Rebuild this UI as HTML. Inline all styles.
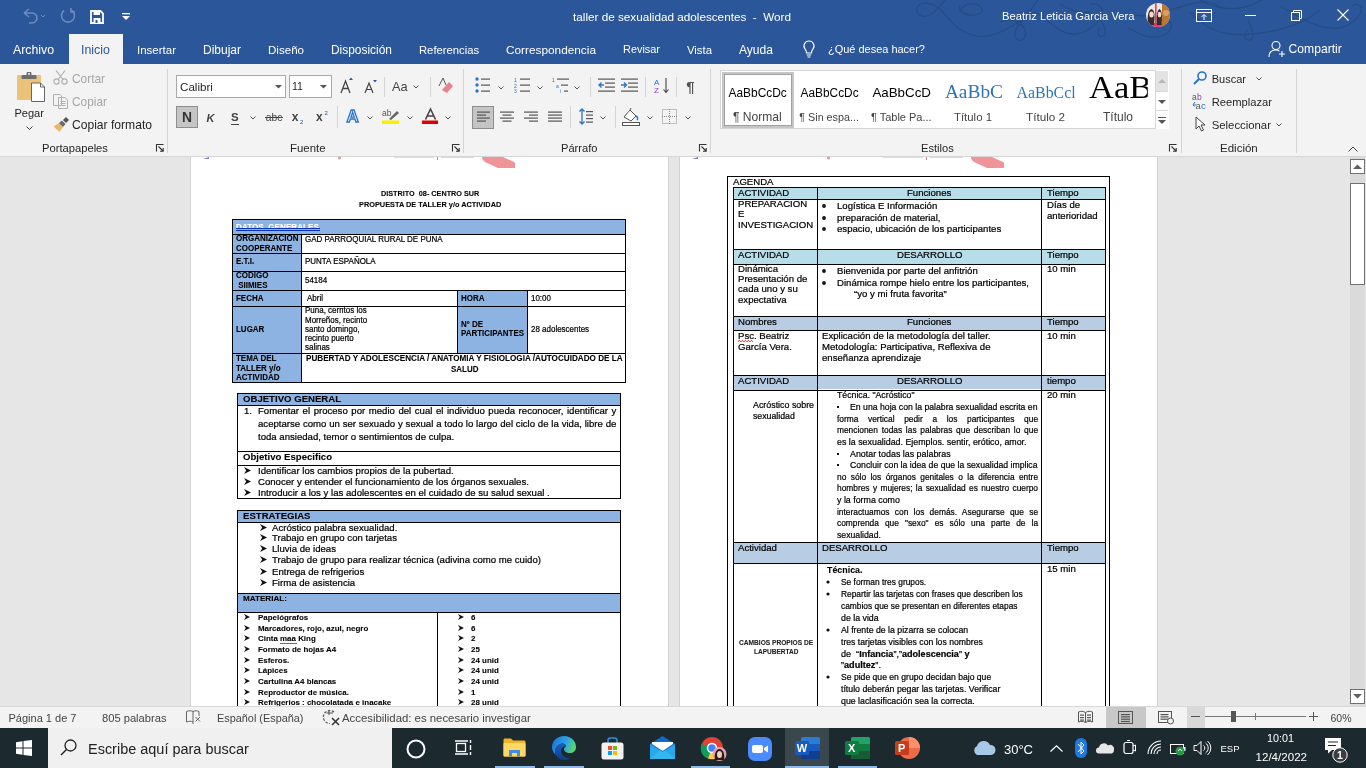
<!DOCTYPE html>
<html><head><meta charset="utf-8">
<style>
*{margin:0;padding:0;box-sizing:border-box}
html,body{width:1366px;height:768px;overflow:hidden;background:#e6e6e6;font-family:"Liberation Sans",sans-serif}
.a{position:absolute;white-space:pre}
svg.a{overflow:visible}
</style></head><body>
<div id="root" style="position:absolute;left:0;top:0;width:1366px;height:768px;overflow:hidden;will-change:transform">
<div class="a" style="left:0px;top:0px;width:1366px;height:64px;background:#2b579a"></div>
<svg class="a" style="left:20px;top:7px;" width="24" height="18" viewBox="0 0 24 18"><path d="M4 6 L9 2 M4 6 L9 10 M4 6 H12 a5 5 0 0 1 0 10 H9" fill="none" stroke="#6d8bbd" stroke-width="1.6"/><path d="M21 8 l2 2 l2 -2" fill="none" stroke="#6d8bbd" stroke-width="1"/></svg>
<svg class="a" style="left:59px;top:7px;" width="18" height="18" viewBox="0 0 18 18"><path d="M5 3.5 A6.5 6.5 0 1 0 13 3.5" fill="none" stroke="#6d8bbd" stroke-width="1.6"/><path d="M12 1 V5 H16" fill="none" stroke="#6d8bbd" stroke-width="1.6"/></svg>
<svg class="a" style="left:90px;top:10px;" width="14" height="14" viewBox="0 0 14 14"><path d="M1 1 H10.5 L13 3.5 V13 H1 Z" fill="none" stroke="#fff" stroke-width="1.8"/><rect x="3.5" y="1.5" width="6.5" height="3.5" fill="#fff"/><rect x="3.5" y="8" width="7" height="5" fill="#fff"/><rect x="5.5" y="10" width="2" height="3" fill="#2b579a"/></svg>
<svg class="a" style="left:122px;top:13px;" width="8" height="8" viewBox="0 0 8 8"><rect x="0" y="0" width="8" height="1.3" fill="#fff"/><path d="M0 3 H8 L4 7 Z" fill="#fff"/></svg>
<svg class="a" style="left:900px;top:0px;" width="466" height="64" viewBox="0 0 466 64"><g fill="none" stroke="#24497f" stroke-width="1.3" opacity="0.75"><path d="M41 10 C30 0 18 2 17 9 C16 16 26 19 33 13 C40 7 44 0 48 -2"/><path d="M41 10 C50 20 56 30 72 35 C88 40 104 32 118 22 C128 15 133 6 138 0"/><path d="M60 12 C62 3 74 2 80 6 C86 10 80 16 70 15 C62 14 58 10 60 5"/><path d="M135 12 C122 18 112 30 116 38 C120 44 128 38 125 30 C122 22 110 18 100 22"/><path d="M135 12 C150 22 160 33 172 34 C184 35 196 26 201 16 C205 8 198 2 190 4"/><path d="M160 4 C170 10 180 14 190 12"/><path d="M200 18 C204 26 208 33 203 36 C198 38 196 32 200 28"/><path d="M228 28 C240 34 250 40 262 36 C272 32 274 24 268 20 C262 18 258 26 266 30"/><path d="M232 14 C248 20 268 10 290 4 C305 0 315 2 320 8"/><path d="M290 12 C300 22 312 32 330 34 C350 36 370 32 385 28 C400 24 410 18 420 10"/><path d="M348 20 C352 30 356 38 350 40 C344 41 343 34 348 30"/><path d="M380 6 C395 14 410 26 430 28 C445 30 455 22 460 14 C464 6 458 2 452 6"/><path d="M300 0 C310 6 325 10 340 8 C355 6 360 0 366 -2"/></g></svg>
<div class="a" style="left:573.00px;top:10px;font-size:11.72px;line-height:13px;color:#ffffff;">taller de sexualidad adolescentes  -  Word</div>
<div class="a" style="left:1002.00px;top:10px;font-size:11.19px;line-height:12px;color:#ffffff;">Beatriz Leticia Garcia Vera</div>
<svg class="a" style="left:1146px;top:3px;" width="24" height="24" viewBox="0 0 24 24"><defs><clipPath id="av"><circle cx="12" cy="12" r="12"/></clipPath></defs><g clip-path="url(#av)"><rect width="24" height="24" fill="#ece6e4"/><rect x="16" y="0" width="8" height="24" fill="#b9772f"/><rect x="9" y="0" width="1.6" height="24" fill="#e8357a"/><rect x="0" y="20" width="16" height="4" fill="#e8357a"/><path d="M2 22 C1 14 2 7 5.5 6 C9 7 9 14 8 22 Z" fill="#3a2a28"/><ellipse cx="5.5" cy="11.5" rx="2.2" ry="3" fill="#f0dcd0"/><path d="M11 22 C10 14 11 7 13.5 6 C16 7 16.5 14 15.5 22 Z" fill="#3a2a28"/><ellipse cx="13.5" cy="11.5" rx="1.8" ry="2.8" fill="#f0dcd0"/><circle cx="20" cy="10" r="3" fill="#d8a060"/></g></svg>
<svg class="a" style="left:1196px;top:9px;" width="16" height="13" viewBox="0 0 16 13"><rect x="0.5" y="0.5" width="15" height="12" fill="none" stroke="#fff"/><line x1="0.5" y1="3.5" x2="15.5" y2="3.5" stroke="#fff"/><path d="M8 11 V6 M5.5 8 L8 5.5 L10.5 8" fill="none" stroke="#fff"/></svg>
<svg class="a" style="left:1245px;top:15px;" width="12" height="2" viewBox="0 0 12 2"><rect width="11" height="1" fill="#fff"/></svg>
<svg class="a" style="left:1291px;top:10px;" width="12" height="12" viewBox="0 0 12 12"><rect x="0.5" y="2.5" width="8" height="8" fill="none" stroke="#fff"/><path d="M2.5 2.5 V0.5 H10.5 V8.5 H8.5" fill="none" stroke="#fff"/></svg>
<svg class="a" style="left:1337px;top:9px;" width="12" height="12" viewBox="0 0 12 12"><path d="M0.5 0.5 L11.5 11.5 M11.5 0.5 L0.5 11.5" stroke="#fff" stroke-width="1.1"/></svg>
<div class="a" style="left:69px;top:34px;width:54px;height:30px;background:#f3f3f3"></div>
<div class="a" style="left:13.00px;top:43px;font-size:12.30px;line-height:14px;color:#ffffff;">Archivo</div>
<div class="a" style="left:81.00px;top:43px;font-size:12.42px;line-height:14px;color:#2b579a;">Inicio</div>
<div class="a" style="left:137.00px;top:44px;font-size:11.50px;line-height:12px;color:#ffffff;">Insertar</div>
<div class="a" style="left:203.00px;top:43px;font-size:12.00px;line-height:14px;color:#ffffff;">Dibujar</div>
<div class="a" style="left:268.00px;top:44px;font-size:11.57px;line-height:12px;color:#ffffff;">Diseño</div>
<div class="a" style="left:331.00px;top:43px;font-size:11.93px;line-height:14px;color:#ffffff;">Disposición</div>
<div class="a" style="left:419.00px;top:44px;font-size:11.25px;line-height:12px;color:#ffffff;">Referencias</div>
<div class="a" style="left:506.00px;top:43px;font-size:11.82px;line-height:14px;color:#ffffff;">Correspondencia</div>
<div class="a" style="left:623.00px;top:43px;font-size:10.92px;line-height:12px;color:#ffffff;">Revisar</div>
<div class="a" style="left:687.00px;top:44px;font-size:11.34px;line-height:12px;color:#ffffff;">Vista</div>
<div class="a" style="left:739.00px;top:43px;font-size:12.07px;line-height:14px;color:#ffffff;">Ayuda</div>
<div class="a" style="left:828.00px;top:43px;font-size:10.98px;line-height:12px;color:#ffffff;">¿Qué desea hacer?</div>
<svg class="a" style="left:803px;top:40px;" width="12" height="18" viewBox="0 0 12 18"><path d="M6 1 A5 5 0 0 1 10 9 C8.5 10.5 8.5 12 8.5 13 H3.5 C3.5 12 3.5 10.5 2 9 A5 5 0 0 1 6 1 Z" fill="none" stroke="#fff" stroke-width="1.1"/><path d="M3.8 15 H8.2 M4.5 17 H7.5" stroke="#fff" stroke-width="1.1"/></svg>
<svg class="a" style="left:1268px;top:40px;" width="18" height="18" viewBox="0 0 18 18"><circle cx="8" cy="5.5" r="4" fill="none" stroke="#fff" stroke-width="1.1"/><path d="M1 17 C1 12 4 10 8 10 C9.5 10 10.5 10.3 11.5 11" fill="none" stroke="#fff" stroke-width="1.1"/><path d="M14 11 V17 M11 14 H17" stroke="#fff" stroke-width="1.1"/></svg>
<div class="a" style="left:1288.60px;top:42px;font-size:12.12px;line-height:14px;color:#ffffff;">Compartir</div>
<div class="a" style="left:0px;top:64px;width:1366px;height:92px;background:#f3f3f3"></div>
<div class="a" style="left:0px;top:156px;width:1366px;height:1px;background:#d6d6d6"></div>
<div class="a" style="left:167px;top:69px;width:1px;height:84px;background:#d4d4d4"></div>
<div class="a" style="left:463px;top:69px;width:1px;height:84px;background:#d4d4d4"></div>
<div class="a" style="left:710px;top:69px;width:1px;height:84px;background:#d4d4d4"></div>
<div class="a" style="left:1181px;top:69px;width:1px;height:84px;background:#d4d4d4"></div>
<div class="a" style="left:1296px;top:69px;width:1px;height:84px;background:#d4d4d4"></div>
<div class="a" style="left:42.00px;top:142px;font-size:11.20px;line-height:12px;color:#262626;">Portapapeles</div>
<div class="a" style="left:290.00px;top:142px;font-size:11.40px;line-height:12px;color:#262626;">Fuente</div>
<div class="a" style="left:561.00px;top:142px;font-size:11.13px;line-height:12px;color:#262626;">Párrafo</div>
<div class="a" style="left:921.00px;top:142px;font-size:11.10px;line-height:12px;color:#262626;">Estilos</div>
<div class="a" style="left:1220.00px;top:142px;font-size:11.53px;line-height:12px;color:#262626;">Edición</div>
<svg class="a" style="left:156px;top:144px;" width="8" height="8" viewBox="0 0 8 8"><path d="M0.5 7.5 V0.5 H7.5" fill="none" stroke="#333" stroke-width="1.1"/><path d="M2.5 2.5 L7 7 M4 7.2 H7.2 V4" fill="none" stroke="#333" stroke-width="1.1"/></svg>
<svg class="a" style="left:452px;top:144px;" width="8" height="8" viewBox="0 0 8 8"><path d="M0.5 7.5 V0.5 H7.5" fill="none" stroke="#333" stroke-width="1.1"/><path d="M2.5 2.5 L7 7 M4 7.2 H7.2 V4" fill="none" stroke="#333" stroke-width="1.1"/></svg>
<svg class="a" style="left:699px;top:144px;" width="8" height="8" viewBox="0 0 8 8"><path d="M0.5 7.5 V0.5 H7.5" fill="none" stroke="#333" stroke-width="1.1"/><path d="M2.5 2.5 L7 7 M4 7.2 H7.2 V4" fill="none" stroke="#333" stroke-width="1.1"/></svg>
<svg class="a" style="left:1169px;top:144px;" width="8" height="8" viewBox="0 0 8 8"><path d="M0.5 7.5 V0.5 H7.5" fill="none" stroke="#333" stroke-width="1.1"/><path d="M2.5 2.5 L7 7 M4 7.2 H7.2 V4" fill="none" stroke="#333" stroke-width="1.1"/></svg>
<svg class="a" style="left:1348px;top:146px;" width="10" height="6" viewBox="0 0 10 6"><path d="M0.5 5.5 L5 1 L9.5 5.5" fill="none" stroke="#444"/></svg>
<svg class="a" style="left:16px;top:71px;" width="30" height="32" viewBox="0 0 30 32"><rect x="1" y="4" width="24" height="25" rx="1" fill="#eac27a"/><path d="M5.5 8 V5.5 C5.5 4.5 6 4 7 4 H10.5 V2.5 C10.5 1.5 11 1 12 1 H14 C15 1 15.5 1.5 15.5 2.5 V4 H19 C20 4 20.5 4.5 20.5 5.5 V8 Z" fill="#6e6e6e"/><circle cx="13" cy="3" r="0.9" fill="#fff"/><path d="M15.5 12 H24.5 L28.5 16 V30.5 H15.5 Z" fill="#fff" stroke="#666" stroke-width="1"/><path d="M24.5 12 V16 H28.5" fill="none" stroke="#666" stroke-width="1"/></svg>
<div class="a" style="left:14.40px;top:107px;font-size:11.09px;line-height:12px;color:#262626;">Pegar</div>
<svg class="a" style="left:26px;top:126px;" width="7" height="4" viewBox="0 0 7 4"><path d="M0.5 0.5 L3.5 3.5 L6.5 0.5" fill="none" stroke="#444"/></svg>
<svg class="a" style="left:53px;top:70px;" width="15" height="15" viewBox="0 0 15 15"><circle cx="3.5" cy="11.5" r="2.6" fill="none" stroke="#b0b0b0" stroke-width="1.2"/><circle cx="11.5" cy="11.5" r="2.6" fill="none" stroke="#b0b0b0" stroke-width="1.2"/><path d="M5 9.5 L12 0.5 M10 9.5 L3 0.5" stroke="#b0b0b0" stroke-width="1.2"/></svg>
<div class="a" style="left:72.00px;top:72px;font-size:11.88px;line-height:14px;color:#a6a6a6;">Cortar</div>
<svg class="a" style="left:53px;top:94px;" width="15" height="15" viewBox="0 0 15 15"><path d="M0.5 0.5 H7 L8.5 2 V11.5 H0.5 Z M5.5 3.5 H12 L14.5 6 V14.5 H5.5 Z" fill="#f3f3f3" stroke="#b0b0b0"/><path d="M7.5 7.5 H12.5 M7.5 9.5 H12.5 M7.5 11.5 H12.5" stroke="#b0b0b0"/></svg>
<div class="a" style="left:72.00px;top:95px;font-size:11.88px;line-height:14px;color:#a6a6a6;">Copiar</div>
<svg class="a" style="left:53px;top:116px;" width="17" height="16" viewBox="0 0 17 16"><path d="M0.5 10.5 L6 7 L10 11 L6.5 16 Z" fill="#e8b868"/><path d="M6 7 L9 4.5 L12.5 8 L10 11 Z" fill="#6a6a6a"/><path d="M10 4 L13 1 L16 4 L13 7 Z" fill="#555"/></svg>
<div class="a" style="left:72.00px;top:118px;font-size:12.10px;line-height:14px;color:#262626;">Copiar formato</div>
<div class="a" style="left:176px;top:75px;width:110px;height:23px;background:#fff;border:1px solid #a8a8a8"></div>
<div class="a" style="left:180.00px;top:80px;font-size:11.64px;line-height:13px;color:#262626;">Calibri</div>
<svg class="a" style="left:275px;top:85px;" width="7" height="4" viewBox="0 0 7 4"><path d="M0 0 H7 L3.5 3.5 Z" fill="#555"/></svg>
<div class="a" style="left:289px;top:75px;width:43px;height:23px;background:#fff;border:1px solid #a8a8a8"></div>
<div class="a" style="left:292.00px;top:80px;font-size:10.60px;line-height:12px;color:#262626;">11</div>
<svg class="a" style="left:320px;top:85px;" width="7" height="4" viewBox="0 0 7 4"><path d="M0 0 H7 L3.5 3.5 Z" fill="#555"/></svg>
<svg class="a" style="left:340px;top:77px;" width="14" height="17" viewBox="0 0 14 17"><path d="M1 16 L5.5 4 L10 16 M2.7 11.5 H8.3" fill="none" stroke="#444" stroke-width="1.3"/><path d="M9 3 L11 0.5 L13 3 Z" fill="#2b579a"/></svg>
<svg class="a" style="left:364px;top:79px;" width="14" height="15" viewBox="0 0 14 15"><path d="M1 14 L5 4 L9 14 M2.5 10.5 H7.5" fill="none" stroke="#444" stroke-width="1.2"/><path d="M9 1 H13 L11 3.5 Z" fill="#2b579a"/></svg>
<div class="a" style="left:384px;top:77px;width:1px;height:20px;background:#d4d4d4"></div>
<div class="a" style="left:392.00px;top:79px;font-size:12.75px;line-height:15px;color:#444;">Aa</div>
<svg class="a" style="left:413px;top:85px;" width="6" height="4" viewBox="0 0 6 4"><path d="M0.5 0.5 L3 3 L5.5 0.5" fill="none" stroke="#555"/></svg>
<div class="a" style="left:430px;top:77px;width:1px;height:20px;background:#d4d4d4"></div>
<svg class="a" style="left:438px;top:77px;" width="15" height="17" viewBox="0 0 15 17"><path d="M1 9 L5 1 L8 8" fill="none" stroke="#555" stroke-width="1"/><path d="M4 13 L11 5 L15 9 L9 16 Z" fill="#e8828c"/></svg>
<div class="a" style="left:176px;top:106px;width:22px;height:22px;background:#c5c5c5;border:1px solid #8d8d8d"></div>
<div class="a" style="left:182.00px;top:109px;font-size:13.85px;line-height:16px;font-weight:bold;color:#333;">N</div>
<div class="a" style="left:206.50px;top:112px;font-size:11.00px;line-height:12px;font-weight:bold;color:#444;font-style:italic;">K</div>
<div class="a" style="left:231.00px;top:111px;font-size:11.50px;line-height:12px;font-weight:bold;color:#444;">S</div>
<div class="a" style="left:231px;top:124px;width:8px;height:1px;background:#444"></div>
<svg class="a" style="left:250px;top:116px;" width="6" height="4" viewBox="0 0 6 4"><path d="M0.5 0.5 L3 3 L5.5 0.5" fill="none" stroke="#555"/></svg>
<div class="a" style="left:265.80px;top:112px;font-size:10.30px;line-height:11px;color:#444;">abc</div>
<div class="a" style="left:265px;top:117px;width:18px;height:1px;background:#444"></div>
<div class="a" style="left:291.70px;top:110px;font-size:12.00px;line-height:14px;font-weight:bold;color:#444;">x</div>
<div class="a" style="left:300.00px;top:119px;font-size:6.00px;line-height:6px;color:#2b579a;">2</div>
<div class="a" style="left:316.00px;top:110px;font-size:12.00px;line-height:14px;font-weight:bold;color:#444;">x</div>
<div class="a" style="left:324.50px;top:110px;font-size:6.00px;line-height:6px;color:#2b579a;">2</div>
<div class="a" style="left:337px;top:106px;width:1px;height:22px;background:#d4d4d4"></div>
<svg class="a" style="left:346px;top:107px;" width="15" height="17" viewBox="0 0 15 17"><text x="0.5" y="15" font-size="17" font-weight="bold" fill="#eef4fb" stroke="#2b74c7" stroke-width="1.3" font-family="Liberation Sans">A</text></svg>
<svg class="a" style="left:367px;top:116px;" width="6" height="4" viewBox="0 0 6 4"><path d="M0.5 0.5 L3 3 L5.5 0.5" fill="none" stroke="#555"/></svg>
<svg class="a" style="left:382px;top:108px;" width="18" height="17" viewBox="0 0 18 17"><text x="0" y="8" font-size="8.5" fill="#555" font-family="Liberation Sans">ab</text><path d="M7 11 L15 3 L17 5 L9 12 Z" fill="#666"/><rect x="0" y="12.5" width="17" height="3.5" fill="#f8f000"/></svg>
<svg class="a" style="left:407px;top:116px;" width="6" height="4" viewBox="0 0 6 4"><path d="M0.5 0.5 L3 3 L5.5 0.5" fill="none" stroke="#555"/></svg>
<svg class="a" style="left:422px;top:108px;" width="17" height="17" viewBox="0 0 17 17"><path d="M3.5 11.5 L8.5 1 L13.5 11.5 M5.3 8 H11.7" fill="none" stroke="#444" stroke-width="1.6"/><rect x="0" y="12.5" width="16" height="3.5" fill="#e00000"/></svg>
<svg class="a" style="left:445px;top:116px;" width="6" height="4" viewBox="0 0 6 4"><path d="M0.5 0.5 L3 3 L5.5 0.5" fill="none" stroke="#555"/></svg>
<svg class="a" style="left:475px;top:77px;" width="15" height="16" viewBox="0 0 15 16"><circle cx="2" cy="2" r="1.7" fill="#2b74c7"/><circle cx="2" cy="8" r="1.7" fill="#2b74c7"/><circle cx="2" cy="14" r="1.7" fill="#2b74c7"/><rect x="6" y="1.5" width="9" height="1.2" fill="#555"/><rect x="6" y="7.5" width="9" height="1.2" fill="#555"/><rect x="6" y="13.5" width="9" height="1.2" fill="#555"/></svg>
<svg class="a" style="left:498px;top:86px;" width="6" height="4" viewBox="0 0 6 4"><path d="M0.5 0.5 L3 3 L5.5 0.5" fill="none" stroke="#555"/></svg>
<svg class="a" style="left:514px;top:77px;" width="16" height="16" viewBox="0 0 16 16"><text x="0" y="5" font-size="5" fill="#2b74c7" font-family="Liberation Sans">1</text><text x="0" y="11" font-size="5" fill="#2b74c7" font-family="Liberation Sans">2</text><text x="0" y="16" font-size="5" fill="#2b74c7" font-family="Liberation Sans">3</text><rect x="6" y="1.5" width="10" height="1.2" fill="#555"/><rect x="6" y="7.5" width="10" height="1.2" fill="#555"/><rect x="6" y="13.5" width="10" height="1.2" fill="#555"/></svg>
<svg class="a" style="left:537px;top:86px;" width="6" height="4" viewBox="0 0 6 4"><path d="M0.5 0.5 L3 3 L5.5 0.5" fill="none" stroke="#555"/></svg>
<svg class="a" style="left:552px;top:77px;" width="17" height="16" viewBox="0 0 17 16"><text x="0" y="5" font-size="5" fill="#2b74c7" font-family="Liberation Sans">1</text><text x="4" y="11" font-size="5" fill="#2b74c7" font-family="Liberation Sans">a</text><text x="8" y="16" font-size="5" fill="#2b74c7" font-family="Liberation Sans">i</text><rect x="5" y="1.5" width="12" height="1.2" fill="#555"/><rect x="9" y="7.5" width="7" height="1.2" fill="#555"/><rect x="12" y="13.5" width="4" height="1.2" fill="#555"/></svg>
<svg class="a" style="left:574px;top:86px;" width="6" height="4" viewBox="0 0 6 4"><path d="M0.5 0.5 L3 3 L5.5 0.5" fill="none" stroke="#555"/></svg>
<div class="a" style="left:590px;top:77px;width:1px;height:20px;background:#d4d4d4"></div>
<svg class="a" style="left:598px;top:78px;" width="17" height="14" viewBox="0 0 17 14"><rect x="0" y="0.5" width="17" height="1.2" fill="#555"/><rect x="7" y="4.5" width="10" height="1.2" fill="#555"/><rect x="7" y="8.5" width="10" height="1.2" fill="#555"/><rect x="0" y="12.5" width="17" height="1.2" fill="#555"/><path d="M6 7 H1 M3.5 4.5 L1 7 L3.5 9.5" fill="none" stroke="#2b74c7" stroke-width="1.4"/></svg>
<svg class="a" style="left:621px;top:78px;" width="17" height="14" viewBox="0 0 17 14"><rect x="0" y="0.5" width="17" height="1.2" fill="#555"/><rect x="7" y="4.5" width="10" height="1.2" fill="#555"/><rect x="7" y="8.5" width="10" height="1.2" fill="#555"/><rect x="0" y="12.5" width="17" height="1.2" fill="#555"/><path d="M0 7 H5.5 M3 4.5 L5.5 7 L3 9.5" fill="none" stroke="#2b74c7" stroke-width="1.4"/></svg>
<div class="a" style="left:645px;top:77px;width:1px;height:20px;background:#d4d4d4"></div>
<svg class="a" style="left:654px;top:77px;" width="16" height="17" viewBox="0 0 16 17"><text x="0" y="7.5" font-size="8" fill="#2b74c7" font-family="Liberation Sans">A</text><text x="0" y="16" font-size="8" fill="#8e44ad" font-family="Liberation Sans">Z</text><path d="M12 1 V15 M9.5 12.5 L12 15.5 L14.5 12.5" fill="none" stroke="#444" stroke-width="1.1"/></svg>
<div class="a" style="left:676px;top:77px;width:1px;height:20px;background:#d4d4d4"></div>
<div class="a" style="left:686.30px;top:78px;font-size:15.00px;line-height:17px;font-weight:bold;color:#555;">¶</div>
<div class="a" style="left:472px;top:106px;width:22px;height:23px;background:#c5c5c5;border:1px solid #8d8d8d"></div>
<svg class="a" style="left:477px;top:111px;" width="13" height="12" viewBox="0 0 13 12"><rect x="0" y="0.5" width="13" height="1.2" fill="#555"/><rect x="0" y="3.5" width="9" height="1.2" fill="#555"/><rect x="0" y="6.5" width="13" height="1.2" fill="#555"/><rect x="0" y="9.5" width="9" height="1.2" fill="#555"/></svg>
<svg class="a" style="left:500px;top:111px;" width="14" height="12" viewBox="0 0 14 12"><rect x="0" y="0.5" width="14" height="1.2" fill="#555"/><rect x="2.5" y="3.5" width="9" height="1.2" fill="#555"/><rect x="0" y="6.5" width="14" height="1.2" fill="#555"/><rect x="2.5" y="9.5" width="9" height="1.2" fill="#555"/></svg>
<svg class="a" style="left:524px;top:111px;" width="14" height="12" viewBox="0 0 14 12"><rect x="0" y="0.5" width="14" height="1.2" fill="#555"/><rect x="5" y="3.5" width="9" height="1.2" fill="#555"/><rect x="0" y="6.5" width="14" height="1.2" fill="#555"/><rect x="5" y="9.5" width="9" height="1.2" fill="#555"/></svg>
<svg class="a" style="left:548px;top:111px;" width="14" height="12" viewBox="0 0 14 12"><rect x="0" y="0.5" width="14" height="1.2" fill="#555"/><rect x="0" y="3.5" width="14" height="1.2" fill="#555"/><rect x="0" y="6.5" width="14" height="1.2" fill="#555"/><rect x="0" y="9.5" width="14" height="1.2" fill="#555"/></svg>
<div class="a" style="left:570px;top:106px;width:1px;height:22px;background:#d4d4d4"></div>
<svg class="a" style="left:579px;top:108px;" width="14" height="17" viewBox="0 0 14 17"><path d="M3 1 V16 M0.5 3.5 L3 1 L5.5 3.5 M0.5 13.5 L3 16 L5.5 13.5" fill="none" stroke="#2b74c7" stroke-width="1.3"/><rect x="7" y="3.0" width="7" height="1.2" fill="#555"/><rect x="7" y="6.5" width="7" height="1.2" fill="#555"/><rect x="7" y="10.0" width="7" height="1.2" fill="#555"/><rect x="7" y="13.5" width="7" height="1.2" fill="#555"/></svg>
<svg class="a" style="left:600px;top:116px;" width="6" height="4" viewBox="0 0 6 4"><path d="M0.5 0.5 L3 3 L5.5 0.5" fill="none" stroke="#555"/></svg>
<div class="a" style="left:615px;top:106px;width:1px;height:22px;background:#d4d4d4"></div>
<svg class="a" style="left:622px;top:107px;" width="18" height="19" viewBox="0 0 18 19"><path d="M2 10 L8 3 L14 9 L9 14 Z" fill="#fff" stroke="#555"/><path d="M9 1 L8 3" stroke="#555"/><path d="M14 9 C16 10 16 12 15 13" fill="none" stroke="#2b74c7" stroke-width="1.4"/><rect x="0.5" y="15.5" width="17" height="3" fill="#fff" stroke="#555"/></svg>
<svg class="a" style="left:647px;top:116px;" width="6" height="4" viewBox="0 0 6 4"><path d="M0.5 0.5 L3 3 L5.5 0.5" fill="none" stroke="#555"/></svg>
<svg class="a" style="left:662px;top:109px;" width="15" height="15" viewBox="0 0 15 15"><rect x="0.5" y="0.5" width="14" height="14" fill="none" stroke="#888" stroke-dasharray="1 1"/><path d="M7.5 0 V15 M0 7.5 H15" stroke="#888" stroke-dasharray="1 1"/></svg>
<svg class="a" style="left:685px;top:116px;" width="6" height="4" viewBox="0 0 6 4"><path d="M0.5 0.5 L3 3 L5.5 0.5" fill="none" stroke="#555"/></svg>
<div class="a" style="left:720px;top:70px;width:449px;height:59px;background:#fff;border:1px solid #d6d6d6"></div>
<div class="a" style="left:722px;top:72px;width:72px;height:56px;background:#fff;border:2px solid #c6c6c6;outline:1px solid #a0a0a0;outline-offset:-3px"></div>
<div class="a" style="left:728.50px;top:86px;font-size:11.92px;line-height:14px;color:#000;">AaBbCcDc</div>
<div class="a" style="left:733.00px;top:110px;font-size:12.06px;line-height:14px;color:#444;">¶ Normal</div>
<div class="a" style="left:800.60px;top:86px;font-size:11.86px;line-height:14px;color:#000;">AaBbCcDc</div>
<div class="a" style="left:799.30px;top:111px;font-size:10.78px;line-height:12px;color:#444;">¶ Sin espa...</div>
<div class="a" style="left:872.40px;top:85px;font-size:13.35px;line-height:15px;color:#000;">AaBbCcD</div>
<div class="a" style="left:870.90px;top:111px;font-size:11.01px;line-height:12px;color:#444;">¶ Table Pa...</div>
<div class="a" style="left:944.90px;top:81px;font-size:19.37px;line-height:22px;font-family:'Liberation Serif',serif;color:#2e74b5;">AaBbC</div>
<div class="a" style="left:954.00px;top:111px;font-size:11.40px;line-height:12px;color:#444;">Título 1</div>
<div class="a" style="left:1016.60px;top:84px;font-size:15.85px;line-height:17px;font-family:'Liberation Serif',serif;color:#2e74b5;">AaBbCcl</div>
<div class="a" style="left:1026.00px;top:110px;font-size:11.70px;line-height:13px;color:#444;">Título 2</div>
<div class="a" style="left:1089.00px;top:71px;font-size:30.50px;line-height:34px;font-family:'Liberation Serif',serif;color:#000;overflow:hidden;width:52px;transform:scaleX(1.13);transform-origin:0 0;">AaB</div>
<div class="a" style="left:1103.00px;top:110px;font-size:12.00px;line-height:14px;color:#444;">Título</div>
<div class="a" style="left:1155px;top:70px;width:14px;height:59px;background:#fff;border-left:1px solid #d6d6d6"></div>
<div class="a" style="left:1156px;top:71px;width:12px;height:20px;background:#e3e3e3"></div>
<svg class="a" style="left:1158px;top:79px;" width="8" height="4" viewBox="0 0 8 4"><path d="M0 4 L4 0 L8 4 Z" fill="#b8b8b8"/></svg>
<div class="a" style="left:1156px;top:91px;width:12px;height:1px;background:#d6d6d6"></div>
<svg class="a" style="left:1158px;top:100px;" width="8" height="4" viewBox="0 0 8 4"><path d="M0 0 L4 4 L8 0 Z" fill="#555"/></svg>
<div class="a" style="left:1156px;top:110px;width:12px;height:1px;background:#d6d6d6"></div>
<svg class="a" style="left:1158px;top:117px;" width="8" height="7" viewBox="0 0 8 7"><rect x="0" y="0" width="8" height="1" fill="#555"/><path d="M0 3 L4 7 L8 3 Z" fill="#555"/></svg>
<svg class="a" style="left:1193px;top:71px;" width="14" height="14" viewBox="0 0 14 14"><circle cx="9" cy="5" r="4" fill="none" stroke="#2b74c7" stroke-width="1.6"/><path d="M6 8 L1 13" stroke="#2b74c7" stroke-width="2"/></svg>
<div class="a" style="left:1211.70px;top:73px;font-size:11.02px;line-height:12px;color:#262626;">Buscar</div>
<svg class="a" style="left:1256px;top:77px;" width="6" height="4" viewBox="0 0 6 4"><path d="M0.5 0.5 L3 3 L5.5 0.5" fill="none" stroke="#555"/></svg>
<svg class="a" style="left:1192px;top:93px;" width="16" height="17" viewBox="0 0 16 17"><text x="0" y="7" font-size="8.5" fill="#555" font-family="Liberation Sans">a</text><text x="5" y="7" font-size="8.5" fill="#8e44ad" font-family="Liberation Sans">b</text><text x="3.5" y="15.5" font-size="9.5" fill="#555" font-family="Liberation Sans">a</text><text x="9" y="15.5" font-size="9.5" fill="#2b74c7" font-family="Liberation Sans">c</text><path d="M3 9 L1 12 H4 M1 12 L2.5 13.5" fill="none" stroke="#2b74c7" stroke-width="1"/></svg>
<div class="a" style="left:1211.70px;top:96px;font-size:11.19px;line-height:12px;color:#262626;">Reemplazar</div>
<svg class="a" style="left:1195px;top:116px;" width="11" height="16" viewBox="0 0 11 16"><path d="M1 1 L1 13 L4 10 L6.5 15 L8.5 14 L6 9 L10 9 Z" fill="#fff" stroke="#444" stroke-width="1"/></svg>
<div class="a" style="left:1211.70px;top:119px;font-size:11.35px;line-height:12px;color:#262626;">Seleccionar</div>
<svg class="a" style="left:1276px;top:123px;" width="6" height="4" viewBox="0 0 6 4"><path d="M0.5 0.5 L3 3 L5.5 0.5" fill="none" stroke="#555"/></svg>
<div class="a" style="left:0px;top:157px;width:1366px;height:549px;background:#e6e6e6"></div>
<div class="a" style="left:1350px;top:157px;width:15px;height:549px;background:#dadada"></div>
<div class="a" style="left:1350px;top:159px;width:15px;height:15px;background:#fff;border:1px solid #707070"></div>
<svg class="a" style="left:1353px;top:164px;" width="9" height="5" viewBox="0 0 9 5"><path d="M0 5 L4.5 0.5 L9 5 Z" fill="#606060"/></svg>
<div class="a" style="left:1350px;top:183px;width:15px;height:102px;background:#fff;border:1px solid #707070"></div>
<div class="a" style="left:1350px;top:689px;width:15px;height:15px;background:#fff;border:1px solid #707070"></div>
<svg class="a" style="left:1353px;top:694px;" width="9" height="5" viewBox="0 0 9 5"><path d="M0 0 L4.5 4.5 L9 0 Z" fill="#606060"/></svg>
<div class="a" style="left:191px;top:157px;width:477px;height:549px;background:#fff;box-shadow:-1px 0 0 #d0d0d0, 1px 0 0 #d0d0d0"></div>
<div class="a" style="left:680px;top:157px;width:477px;height:549px;background:#fff;box-shadow:-1px 0 0 #d0d0d0, 1px 0 0 #d0d0d0"></div>
<svg class="a" style="left:482px;top:157px;" width="34" height="11" viewBox="0 0 34 11"><path d="M0 0 H21 L33 5.5 V11 H16 L4 5.5 C1 4 0 2 0 0 Z" fill="#f0949a"/></svg>
<svg class="a" style="left:203px;top:157px;" width="6" height="3" viewBox="0 0 6 3"><path d="M0 2 L6 0 V2 Z" fill="#8080b0"/></svg>
<svg class="a" style="left:337px;top:157px;" width="5" height="3" viewBox="0 0 5 3"><circle cx="2.5" cy="1" r="1.5" fill="#d8a0a0"/></svg>
<div class="a" style="left:394px;top:157px;width:40px;height:1px;background:#d8e8d0"></div>
<div class="a" style="left:437px;top:157px;width:1px;height:3px;background:#e08080"></div>
<div class="a" style="left:441px;top:157px;width:33px;height:1px;background:#d8d8e8"></div>
<svg class="a" style="left:971px;top:157px;" width="34" height="11" viewBox="0 0 34 11"><path d="M0 0 H21 L33 5.5 V11 H16 L4 5.5 C1 4 0 2 0 0 Z" fill="#f0949a"/></svg>
<svg class="a" style="left:692px;top:157px;" width="6" height="3" viewBox="0 0 6 3"><path d="M0 2 L6 0 V2 Z" fill="#8080b0"/></svg>
<svg class="a" style="left:826px;top:157px;" width="5" height="3" viewBox="0 0 5 3"><circle cx="2.5" cy="1" r="1.5" fill="#d8a0a0"/></svg>
<div class="a" style="left:883px;top:157px;width:40px;height:1px;background:#d8e8d0"></div>
<div class="a" style="left:926px;top:157px;width:1px;height:3px;background:#e08080"></div>
<div class="a" style="left:930px;top:157px;width:33px;height:1px;background:#d8d8e8"></div>
<div class="a" style="left:381.00px;top:189px;font-size:7.27px;line-height:9px;font-weight:bold;color:#000;-webkit-text-stroke:0.08800000000000001px currentColor;transform:scaleX(0.9999);transform-origin:0 0;">DISTRITO  08- CENTRO SUR</div>
<div class="a" style="left:359.00px;top:200px;font-size:7.37px;line-height:9px;font-weight:bold;color:#000;-webkit-text-stroke:0.08800000000000001px currentColor;transform:scaleX(0.9999);transform-origin:0 0;">PROPUESTA DE TALLER y/o ACTIVIDAD</div>
<div class="a" style="left:232px;top:219px;width:393px;height:15px;background:#8db3e2"></div>
<div class="a" style="left:232px;top:234px;width:69px;height:148px;background:#8db3e2"></div>
<div class="a" style="left:457px;top:290px;width:70px;height:63px;background:#8db3e2"></div>
<div class="a" style="left:232px;top:219px;width:394px;height:1px;background:#000"></div>
<div class="a" style="left:232px;top:234px;width:394px;height:1px;background:#000"></div>
<div class="a" style="left:232px;top:253px;width:394px;height:1px;background:#000"></div>
<div class="a" style="left:232px;top:271px;width:394px;height:1px;background:#000"></div>
<div class="a" style="left:232px;top:290px;width:394px;height:1px;background:#000"></div>
<div class="a" style="left:232px;top:306px;width:394px;height:1px;background:#000"></div>
<div class="a" style="left:232px;top:353px;width:394px;height:1px;background:#000"></div>
<div class="a" style="left:232px;top:382px;width:394px;height:1px;background:#000"></div>
<div class="a" style="left:232px;top:219px;width:1px;height:164px;background:#000"></div>
<div class="a" style="left:625px;top:219px;width:1px;height:164px;background:#000"></div>
<div class="a" style="left:301px;top:234px;width:1px;height:149px;background:#000"></div>
<div class="a" style="left:457px;top:290px;width:1px;height:64px;background:#000"></div>
<div class="a" style="left:527px;top:290px;width:1px;height:64px;background:#000"></div>
<div class="a" style="left:236.00px;top:222px;font-size:8.56px;line-height:10px;font-weight:bold;color:#fff;-webkit-text-stroke:0.08800000000000001px currentColor;transform:scaleX(0.9524);transform-origin:0 0;">DATOS  GENERALES</div>
<div class="a" style="left:233px;top:228px;width:392px;height:6px;background:#8db3e2"></div>
<div class="a" style="left:236px;top:228px;width:84px;height:1px;background:#0a32b4"></div>
<div class="a" style="left:236px;top:230px;width:84px;height:1px;background:#0a32b4"></div>
<div class="a" style="left:236.00px;top:233px;font-size:8.40px;line-height:10px;font-weight:bold;color:#000;-webkit-text-stroke:0.08800000000000001px currentColor;transform:scaleX(0.9524);transform-origin:0 0;">ORGANIZACION</div>
<div class="a" style="left:236.00px;top:243px;font-size:8.40px;line-height:10px;font-weight:bold;color:#000;-webkit-text-stroke:0.08800000000000001px currentColor;transform:scaleX(0.9524);transform-origin:0 0;">COOPERANTE</div>
<div class="a" style="left:305.20px;top:234px;font-size:8.40px;line-height:10px;color:#000;-webkit-text-stroke:0.22px currentColor;transform:scaleX(0.9524);transform-origin:0 0;">GAD PARROQUIAL RURAL DE PUNÁ</div>
<div class="a" style="left:236.00px;top:256px;font-size:8.40px;line-height:10px;font-weight:bold;color:#000;-webkit-text-stroke:0.08800000000000001px currentColor;transform:scaleX(0.9524);transform-origin:0 0;">E.T.I.</div>
<div class="a" style="left:305.20px;top:256px;font-size:8.40px;line-height:10px;color:#000;-webkit-text-stroke:0.22px currentColor;transform:scaleX(0.9524);transform-origin:0 0;">PUNTA ESPAÑOLA</div>
<div class="a" style="left:236.00px;top:270px;font-size:8.40px;line-height:10px;font-weight:bold;color:#000;-webkit-text-stroke:0.08800000000000001px currentColor;transform:scaleX(0.9524);transform-origin:0 0;">CODIGO</div>
<div class="a" style="left:236.00px;top:280px;font-size:8.40px;line-height:10px;font-weight:bold;color:#000;-webkit-text-stroke:0.08800000000000001px currentColor;transform:scaleX(0.9524);transform-origin:0 0;"> SIIMIES</div>
<div class="a" style="left:305.20px;top:275px;font-size:8.40px;line-height:10px;color:#000;-webkit-text-stroke:0.22px currentColor;transform:scaleX(0.9524);transform-origin:0 0;">54184</div>
<div class="a" style="left:236.00px;top:293px;font-size:8.40px;line-height:10px;font-weight:bold;color:#000;-webkit-text-stroke:0.08800000000000001px currentColor;transform:scaleX(0.9524);transform-origin:0 0;">FECHA</div>
<div class="a" style="left:307.00px;top:293px;font-size:8.40px;line-height:10px;color:#000;-webkit-text-stroke:0.22px currentColor;transform:scaleX(0.9524);transform-origin:0 0;">Abril</div>
<div class="a" style="left:461.40px;top:293px;font-size:8.40px;line-height:10px;font-weight:bold;color:#000;-webkit-text-stroke:0.08800000000000001px currentColor;transform:scaleX(0.9524);transform-origin:0 0;">HORA</div>
<div class="a" style="left:531.20px;top:293px;font-size:8.40px;line-height:10px;color:#000;-webkit-text-stroke:0.22px currentColor;transform:scaleX(0.9524);transform-origin:0 0;">10:00</div>
<div class="a" style="left:236.00px;top:324px;font-size:8.40px;line-height:10px;font-weight:bold;color:#000;-webkit-text-stroke:0.08800000000000001px currentColor;transform:scaleX(0.9524);transform-origin:0 0;">LUGAR</div>
<div class="a" style="left:304.90px;top:305px;font-size:8.40px;line-height:10px;color:#000;-webkit-text-stroke:0.22px currentColor;transform:scaleX(0.9524);transform-origin:0 0;">Puna, cerritos los</div>
<div class="a" style="left:304.90px;top:315px;font-size:8.40px;line-height:10px;color:#000;-webkit-text-stroke:0.22px currentColor;transform:scaleX(0.9524);transform-origin:0 0;">Morreños, recinto</div>
<div class="a" style="left:304.90px;top:324px;font-size:8.40px;line-height:10px;color:#000;-webkit-text-stroke:0.22px currentColor;transform:scaleX(0.9524);transform-origin:0 0;">santo domingo,</div>
<div class="a" style="left:304.90px;top:333px;font-size:8.40px;line-height:10px;color:#000;-webkit-text-stroke:0.22px currentColor;transform:scaleX(0.9524);transform-origin:0 0;">recinto puerto</div>
<div class="a" style="left:304.90px;top:342px;font-size:8.40px;line-height:10px;color:#000;-webkit-text-stroke:0.22px currentColor;transform:scaleX(0.9524);transform-origin:0 0;">salinas</div>
<div class="a" style="left:461.40px;top:319px;font-size:8.40px;line-height:10px;font-weight:bold;color:#000;-webkit-text-stroke:0.08800000000000001px currentColor;transform:scaleX(0.9524);transform-origin:0 0;">Nº DE</div>
<div class="a" style="left:461.40px;top:328px;font-size:8.40px;line-height:10px;font-weight:bold;color:#000;-webkit-text-stroke:0.08800000000000001px currentColor;transform:scaleX(0.9524);transform-origin:0 0;">PARTICIPANTES</div>
<div class="a" style="left:531.20px;top:324px;font-size:8.40px;line-height:10px;color:#000;-webkit-text-stroke:0.22px currentColor;transform:scaleX(0.9524);transform-origin:0 0;">28 adolescentes</div>
<div class="a" style="left:236.00px;top:353px;font-size:8.40px;line-height:10px;font-weight:bold;color:#000;-webkit-text-stroke:0.08800000000000001px currentColor;transform:scaleX(0.9524);transform-origin:0 0;">TEMA DEL</div>
<div class="a" style="left:236.00px;top:363px;font-size:8.40px;line-height:10px;font-weight:bold;color:#000;-webkit-text-stroke:0.08800000000000001px currentColor;transform:scaleX(0.9524);transform-origin:0 0;">TALLER y/o</div>
<div class="a" style="left:236.00px;top:372px;font-size:8.40px;line-height:10px;font-weight:bold;color:#000;-webkit-text-stroke:0.08800000000000001px currentColor;transform:scaleX(0.9524);transform-origin:0 0;">ACTIVIDAD</div>
<div class="a" style="left:306.10px;top:353px;font-size:8.55px;line-height:10px;font-weight:bold;color:#000;-webkit-text-stroke:0.08800000000000001px currentColor;transform:scaleX(0.9524);transform-origin:0 0;">PUBERTAD Y ADOLESCENCIA / ANATOMIA Y FISIOLOGIA /AUTOCUIDADO DE LA</div>
<div class="a" style="left:451.20px;top:364px;font-size:8.40px;line-height:10px;font-weight:bold;color:#000;-webkit-text-stroke:0.08800000000000001px currentColor;transform:scaleX(0.9524);transform-origin:0 0;">SALUD</div>
<div class="a" style="left:237px;top:393px;width:383px;height:12px;background:#8db3e2"></div>
<div class="a" style="left:237px;top:393px;width:384px;height:1px;background:#000"></div>
<div class="a" style="left:237px;top:405px;width:384px;height:1px;background:#000"></div>
<div class="a" style="left:237px;top:451px;width:384px;height:1px;background:#000"></div>
<div class="a" style="left:237px;top:465px;width:384px;height:1px;background:#000"></div>
<div class="a" style="left:237px;top:498px;width:384px;height:1px;background:#000"></div>
<div class="a" style="left:237px;top:393px;width:1px;height:106px;background:#000"></div>
<div class="a" style="left:620px;top:393px;width:1px;height:106px;background:#000"></div>
<div class="a" style="left:243.20px;top:393px;font-size:9.60px;line-height:11px;font-weight:bold;color:#000;-webkit-text-stroke:0.08800000000000001px currentColor;transform:scaleX(0.9999);transform-origin:0 0;">OBJETIVO GENERAL</div>
<div class="a" style="left:243.70px;top:405px;font-size:9.60px;line-height:11px;color:#000;-webkit-text-stroke:0.22px currentColor;transform:scaleX(0.9999);transform-origin:0 0;">1.</div>
<div class="a" style="left:257.70px;top:405px;font-size:9.60px;line-height:11px;color:#000;-webkit-text-stroke:0.22px currentColor;transform:scaleX(0.9999);transform-origin:0 0;word-spacing:0.891px;">Fomentar el proceso por medio del cual el individuo pueda reconocer, identificar y</div>
<div class="a" style="left:257.70px;top:418px;font-size:9.60px;line-height:11px;color:#000;-webkit-text-stroke:0.22px currentColor;transform:scaleX(0.9999);transform-origin:0 0;word-spacing:0.158px;">aceptarse como un ser sexuado y sexual a todo lo largo del ciclo de la vida, libre de</div>
<div class="a" style="left:257.70px;top:431px;font-size:9.60px;line-height:11px;color:#000;-webkit-text-stroke:0.22px currentColor;transform:scaleX(0.9999);transform-origin:0 0;">toda ansiedad, temor o sentimientos de culpa.</div>
<div class="a" style="left:243.20px;top:451px;font-size:9.60px;line-height:11px;font-weight:bold;color:#000;-webkit-text-stroke:0.08800000000000001px currentColor;transform:scaleX(0.9999);transform-origin:0 0;">Objetivo Especifico</div>
<svg class="a" style="left:243.5px;top:467.09999999999997px;" width="7" height="7" viewBox="0 0 7 7"><path d="M0 0 L7 3.5 L0 7 L2.2 3.5 Z" fill="#111"/></svg>
<div class="a" style="left:257.70px;top:465px;font-size:9.60px;line-height:11px;color:#000;-webkit-text-stroke:0.22px currentColor;transform:scaleX(0.9999);transform-origin:0 0;">Identificar los cambios propios de la pubertad.</div>
<svg class="a" style="left:243.5px;top:478.09999999999997px;" width="7" height="7" viewBox="0 0 7 7"><path d="M0 0 L7 3.5 L0 7 L2.2 3.5 Z" fill="#111"/></svg>
<div class="a" style="left:257.70px;top:476px;font-size:9.60px;line-height:11px;color:#000;-webkit-text-stroke:0.22px currentColor;transform:scaleX(0.9999);transform-origin:0 0;">Conocer y entender el funcionamiento de los órganos sexuales.</div>
<svg class="a" style="left:243.5px;top:489.0px;" width="7" height="7" viewBox="0 0 7 7"><path d="M0 0 L7 3.5 L0 7 L2.2 3.5 Z" fill="#111"/></svg>
<div class="a" style="left:257.70px;top:487px;font-size:9.60px;line-height:11px;color:#000;-webkit-text-stroke:0.22px currentColor;transform:scaleX(0.9999);transform-origin:0 0;">Introducir a los y las adolescentes en el cuidado de su salud sexual .</div>
<div class="a" style="left:237px;top:510px;width:383px;height:12px;background:#8db3e2"></div>
<div class="a" style="left:237px;top:593px;width:383px;height:19px;background:#8db3e2"></div>
<div class="a" style="left:237px;top:510px;width:384px;height:1px;background:#000"></div>
<div class="a" style="left:237px;top:522px;width:384px;height:1px;background:#000"></div>
<div class="a" style="left:237px;top:593px;width:384px;height:1px;background:#000"></div>
<div class="a" style="left:237px;top:612px;width:384px;height:1px;background:#000"></div>
<div class="a" style="left:237px;top:510px;width:1px;height:197px;background:#000"></div>
<div class="a" style="left:620px;top:510px;width:1px;height:197px;background:#000"></div>
<div class="a" style="left:437px;top:612px;width:1px;height:95px;background:#000"></div>
<div class="a" style="left:243.00px;top:510px;font-size:9.60px;line-height:11px;font-weight:bold;color:#000;-webkit-text-stroke:0.08800000000000001px currentColor;transform:scaleX(0.9999);transform-origin:0 0;">ESTRATEGIAS</div>
<svg class="a" style="left:259.5px;top:524.2px;" width="7" height="7" viewBox="0 0 7 7"><path d="M0 0 L7 3.5 L0 7 L2.2 3.5 Z" fill="#111"/></svg>
<div class="a" style="left:272.20px;top:522px;font-size:9.60px;line-height:11px;color:#000;-webkit-text-stroke:0.22px currentColor;transform:scaleX(0.9999);transform-origin:0 0;">Acróstico palabra sexualidad.</div>
<svg class="a" style="left:259.5px;top:534.2px;" width="7" height="7" viewBox="0 0 7 7"><path d="M0 0 L7 3.5 L0 7 L2.2 3.5 Z" fill="#111"/></svg>
<div class="a" style="left:272.20px;top:532px;font-size:9.60px;line-height:11px;color:#000;-webkit-text-stroke:0.22px currentColor;transform:scaleX(0.9999);transform-origin:0 0;">Trabajo en grupo con tarjetas</div>
<svg class="a" style="left:259.5px;top:545.2px;" width="7" height="7" viewBox="0 0 7 7"><path d="M0 0 L7 3.5 L0 7 L2.2 3.5 Z" fill="#111"/></svg>
<div class="a" style="left:272.20px;top:543px;font-size:9.60px;line-height:11px;color:#000;-webkit-text-stroke:0.22px currentColor;transform:scaleX(0.9999);transform-origin:0 0;">Lluvia de ideas</div>
<svg class="a" style="left:259.5px;top:556.2px;" width="7" height="7" viewBox="0 0 7 7"><path d="M0 0 L7 3.5 L0 7 L2.2 3.5 Z" fill="#111"/></svg>
<div class="a" style="left:272.20px;top:554px;font-size:9.60px;line-height:11px;color:#000;-webkit-text-stroke:0.22px currentColor;transform:scaleX(0.9999);transform-origin:0 0;">Trabajo de grupo para realizar técnica (adivina como me cuido)</div>
<svg class="a" style="left:259.5px;top:568.2px;" width="7" height="7" viewBox="0 0 7 7"><path d="M0 0 L7 3.5 L0 7 L2.2 3.5 Z" fill="#111"/></svg>
<div class="a" style="left:272.20px;top:566px;font-size:9.60px;line-height:11px;color:#000;-webkit-text-stroke:0.22px currentColor;transform:scaleX(0.9999);transform-origin:0 0;">Entrega de refrigerios</div>
<svg class="a" style="left:259.5px;top:579.2px;" width="7" height="7" viewBox="0 0 7 7"><path d="M0 0 L7 3.5 L0 7 L2.2 3.5 Z" fill="#111"/></svg>
<div class="a" style="left:272.20px;top:577px;font-size:9.60px;line-height:11px;color:#000;-webkit-text-stroke:0.22px currentColor;transform:scaleX(0.9999);transform-origin:0 0;">Firma de asistencia</div>
<div class="a" style="left:243.00px;top:594px;font-size:8.10px;line-height:9px;font-weight:bold;color:#000;-webkit-text-stroke:0.08800000000000001px currentColor;transform:scaleX(0.9999);transform-origin:0 0;">MATERIAL:</div>
<svg class="a" style="left:243.5px;top:614.2px;" width="6" height="6" viewBox="0 0 6 6"><path d="M0 0 L6 3 L0 6 L1.8 3 Z" fill="#111"/></svg>
<div class="a" style="left:257.60px;top:613px;font-size:7.95px;line-height:9px;font-weight:bold;color:#000;-webkit-text-stroke:0.08800000000000001px currentColor;transform:scaleX(0.9999);transform-origin:0 0;">Papelógrafos</div>
<svg class="a" style="left:458.2px;top:614.2px;" width="6" height="6" viewBox="0 0 6 6"><path d="M0 0 L6 3 L0 6 L1.8 3 Z" fill="#111"/></svg>
<div class="a" style="left:471.00px;top:613px;font-size:7.95px;line-height:9px;font-weight:bold;color:#000;-webkit-text-stroke:0.08800000000000001px currentColor;transform:scaleX(0.9999);transform-origin:0 0;">6</div>
<svg class="a" style="left:243.5px;top:625.2px;" width="6" height="6" viewBox="0 0 6 6"><path d="M0 0 L6 3 L0 6 L1.8 3 Z" fill="#111"/></svg>
<div class="a" style="left:257.60px;top:624px;font-size:7.95px;line-height:9px;font-weight:bold;color:#000;-webkit-text-stroke:0.08800000000000001px currentColor;transform:scaleX(0.9999);transform-origin:0 0;">Marcadores, rojo, azul, negro</div>
<svg class="a" style="left:458.2px;top:625.2px;" width="6" height="6" viewBox="0 0 6 6"><path d="M0 0 L6 3 L0 6 L1.8 3 Z" fill="#111"/></svg>
<div class="a" style="left:471.00px;top:624px;font-size:7.95px;line-height:9px;font-weight:bold;color:#000;-webkit-text-stroke:0.08800000000000001px currentColor;transform:scaleX(0.9999);transform-origin:0 0;">6</div>
<svg class="a" style="left:243.5px;top:635.2px;" width="6" height="6" viewBox="0 0 6 6"><path d="M0 0 L6 3 L0 6 L1.8 3 Z" fill="#111"/></svg>
<div class="a" style="left:257.60px;top:634px;font-size:7.95px;line-height:9px;font-weight:bold;color:#000;-webkit-text-stroke:0.08800000000000001px currentColor;transform:scaleX(0.9999);transform-origin:0 0;">Cinta maa King</div>
<svg class="a" style="left:458.2px;top:635.2px;" width="6" height="6" viewBox="0 0 6 6"><path d="M0 0 L6 3 L0 6 L1.8 3 Z" fill="#111"/></svg>
<div class="a" style="left:471.00px;top:634px;font-size:7.95px;line-height:9px;font-weight:bold;color:#000;-webkit-text-stroke:0.08800000000000001px currentColor;transform:scaleX(0.9999);transform-origin:0 0;">2</div>
<svg class="a" style="left:243.5px;top:646.2px;" width="6" height="6" viewBox="0 0 6 6"><path d="M0 0 L6 3 L0 6 L1.8 3 Z" fill="#111"/></svg>
<div class="a" style="left:257.60px;top:645px;font-size:7.95px;line-height:9px;font-weight:bold;color:#000;-webkit-text-stroke:0.08800000000000001px currentColor;transform:scaleX(0.9999);transform-origin:0 0;">Formato de hojas A4</div>
<svg class="a" style="left:458.2px;top:646.2px;" width="6" height="6" viewBox="0 0 6 6"><path d="M0 0 L6 3 L0 6 L1.8 3 Z" fill="#111"/></svg>
<div class="a" style="left:471.00px;top:645px;font-size:7.95px;line-height:9px;font-weight:bold;color:#000;-webkit-text-stroke:0.08800000000000001px currentColor;transform:scaleX(0.9999);transform-origin:0 0;">25</div>
<svg class="a" style="left:243.5px;top:657.2px;" width="6" height="6" viewBox="0 0 6 6"><path d="M0 0 L6 3 L0 6 L1.8 3 Z" fill="#111"/></svg>
<div class="a" style="left:257.60px;top:656px;font-size:7.95px;line-height:9px;font-weight:bold;color:#000;-webkit-text-stroke:0.08800000000000001px currentColor;transform:scaleX(0.9999);transform-origin:0 0;">Esferos.</div>
<svg class="a" style="left:458.2px;top:657.2px;" width="6" height="6" viewBox="0 0 6 6"><path d="M0 0 L6 3 L0 6 L1.8 3 Z" fill="#111"/></svg>
<div class="a" style="left:471.00px;top:656px;font-size:7.95px;line-height:9px;font-weight:bold;color:#000;-webkit-text-stroke:0.08800000000000001px currentColor;transform:scaleX(0.9999);transform-origin:0 0;">24 unid</div>
<svg class="a" style="left:243.5px;top:667.2px;" width="6" height="6" viewBox="0 0 6 6"><path d="M0 0 L6 3 L0 6 L1.8 3 Z" fill="#111"/></svg>
<div class="a" style="left:257.60px;top:666px;font-size:7.95px;line-height:9px;font-weight:bold;color:#000;-webkit-text-stroke:0.08800000000000001px currentColor;transform:scaleX(0.9999);transform-origin:0 0;">Lápices</div>
<svg class="a" style="left:458.2px;top:667.2px;" width="6" height="6" viewBox="0 0 6 6"><path d="M0 0 L6 3 L0 6 L1.8 3 Z" fill="#111"/></svg>
<div class="a" style="left:471.00px;top:666px;font-size:7.95px;line-height:9px;font-weight:bold;color:#000;-webkit-text-stroke:0.08800000000000001px currentColor;transform:scaleX(0.9999);transform-origin:0 0;">24 unid</div>
<svg class="a" style="left:243.5px;top:678.2px;" width="6" height="6" viewBox="0 0 6 6"><path d="M0 0 L6 3 L0 6 L1.8 3 Z" fill="#111"/></svg>
<div class="a" style="left:257.60px;top:677px;font-size:7.95px;line-height:9px;font-weight:bold;color:#000;-webkit-text-stroke:0.08800000000000001px currentColor;transform:scaleX(0.9999);transform-origin:0 0;">Cartulina A4 blancas</div>
<svg class="a" style="left:458.2px;top:678.2px;" width="6" height="6" viewBox="0 0 6 6"><path d="M0 0 L6 3 L0 6 L1.8 3 Z" fill="#111"/></svg>
<div class="a" style="left:471.00px;top:677px;font-size:7.95px;line-height:9px;font-weight:bold;color:#000;-webkit-text-stroke:0.08800000000000001px currentColor;transform:scaleX(0.9999);transform-origin:0 0;">24 unid</div>
<svg class="a" style="left:243.5px;top:689.2px;" width="6" height="6" viewBox="0 0 6 6"><path d="M0 0 L6 3 L0 6 L1.8 3 Z" fill="#111"/></svg>
<div class="a" style="left:257.60px;top:688px;font-size:7.95px;line-height:9px;font-weight:bold;color:#000;-webkit-text-stroke:0.08800000000000001px currentColor;transform:scaleX(0.9999);transform-origin:0 0;">Reproductor de música.</div>
<svg class="a" style="left:458.2px;top:689.2px;" width="6" height="6" viewBox="0 0 6 6"><path d="M0 0 L6 3 L0 6 L1.8 3 Z" fill="#111"/></svg>
<div class="a" style="left:471.00px;top:688px;font-size:7.95px;line-height:9px;font-weight:bold;color:#000;-webkit-text-stroke:0.08800000000000001px currentColor;transform:scaleX(0.9999);transform-origin:0 0;">1</div>
<svg class="a" style="left:243.5px;top:699.2px;" width="6" height="6" viewBox="0 0 6 6"><path d="M0 0 L6 3 L0 6 L1.8 3 Z" fill="#111"/></svg>
<div class="a" style="left:257.60px;top:698px;font-size:7.95px;line-height:9px;font-weight:bold;color:#000;-webkit-text-stroke:0.08800000000000001px currentColor;transform:scaleX(0.9999);transform-origin:0 0;">Refrigerios : chocolatada e inacake</div>
<svg class="a" style="left:458.2px;top:699.2px;" width="6" height="6" viewBox="0 0 6 6"><path d="M0 0 L6 3 L0 6 L1.8 3 Z" fill="#111"/></svg>
<div class="a" style="left:471.00px;top:698px;font-size:7.95px;line-height:9px;font-weight:bold;color:#000;-webkit-text-stroke:0.08800000000000001px currentColor;transform:scaleX(0.9999);transform-origin:0 0;">28 unid</div>
<div class="a" style="left:280px;top:643px;width:17px;height:1px;background:#4a6fd0"></div>
<div class="a" style="left:727px;top:176px;width:383px;height:1px;background:#000"></div>
<div class="a" style="left:727px;top:176px;width:1px;height:531px;background:#000"></div>
<div class="a" style="left:1109px;top:176px;width:1px;height:531px;background:#000"></div>
<div class="a" style="left:733.20px;top:176px;font-size:9.60px;line-height:11px;color:#000;-webkit-text-stroke:0.22px currentColor;transform:scaleX(0.9999);transform-origin:0 0;">AGENDA</div>
<div class="a" style="left:733px;top:187px;width:372px;height:12px;background:#b7dde8"></div>
<div class="a" style="left:733px;top:249px;width:372px;height:15px;background:#b7dde8"></div>
<div class="a" style="left:733px;top:316px;width:372px;height:14px;background:#b8cce4"></div>
<div class="a" style="left:733px;top:375px;width:372px;height:15px;background:#b8cce4"></div>
<div class="a" style="left:733px;top:542px;width:372px;height:21px;background:#b8cce4"></div>
<div class="a" style="left:733px;top:187px;width:373px;height:1px;background:#000"></div>
<div class="a" style="left:733px;top:199px;width:373px;height:1px;background:#000"></div>
<div class="a" style="left:733px;top:249px;width:373px;height:1px;background:#000"></div>
<div class="a" style="left:733px;top:264px;width:373px;height:1px;background:#000"></div>
<div class="a" style="left:733px;top:316px;width:373px;height:1px;background:#000"></div>
<div class="a" style="left:733px;top:330px;width:373px;height:1px;background:#000"></div>
<div class="a" style="left:733px;top:375px;width:373px;height:1px;background:#000"></div>
<div class="a" style="left:733px;top:390px;width:373px;height:1px;background:#000"></div>
<div class="a" style="left:733px;top:542px;width:373px;height:1px;background:#000"></div>
<div class="a" style="left:733px;top:563px;width:373px;height:1px;background:#000"></div>
<div class="a" style="left:733px;top:187px;width:1px;height:520px;background:#000"></div>
<div class="a" style="left:1105px;top:187px;width:1px;height:520px;background:#000"></div>
<div class="a" style="left:817px;top:187px;width:1px;height:520px;background:#000"></div>
<div class="a" style="left:1041px;top:187px;width:1px;height:520px;background:#000"></div>
<div class="a" style="left:738.30px;top:187px;font-size:9.60px;line-height:11px;color:#000;-webkit-text-stroke:0.22px currentColor;transform:scaleX(0.9999);transform-origin:0 0;">ACTIVIDAD</div>
<div class="a" style="left:907.36px;top:187px;font-size:9.60px;line-height:11px;color:#000;-webkit-text-stroke:0.22px currentColor;transform:scaleX(0.9999);transform-origin:0 0;">Funciones</div>
<div class="a" style="left:1047.40px;top:187px;font-size:9.60px;line-height:11px;color:#000;-webkit-text-stroke:0.22px currentColor;transform:scaleX(0.9999);transform-origin:0 0;">Tiempo</div>
<div class="a" style="left:738.30px;top:198px;font-size:9.60px;line-height:11px;color:#000;-webkit-text-stroke:0.22px currentColor;transform:scaleX(0.9999);transform-origin:0 0;">PREPARACION</div>
<div class="a" style="left:738.30px;top:208px;font-size:9.60px;line-height:11px;color:#000;-webkit-text-stroke:0.22px currentColor;transform:scaleX(0.9999);transform-origin:0 0;">E</div>
<div class="a" style="left:738.30px;top:219px;font-size:9.60px;line-height:11px;color:#000;-webkit-text-stroke:0.22px currentColor;transform:scaleX(0.9999);transform-origin:0 0;">INVESTIGACION</div>
<svg class="a" style="left:822.2px;top:204px;" width="4" height="4" viewBox="0 0 4 4"><circle cx="2" cy="2" r="1.9" fill="#111"/></svg>
<div class="a" style="left:836.80px;top:200px;font-size:9.60px;line-height:11px;color:#000;-webkit-text-stroke:0.22px currentColor;transform:scaleX(0.9999);transform-origin:0 0;">Logística E Información</div>
<svg class="a" style="left:822.2px;top:215.8px;" width="4" height="4" viewBox="0 0 4 4"><circle cx="2" cy="2" r="1.9" fill="#111"/></svg>
<div class="a" style="left:836.80px;top:212px;font-size:9.60px;line-height:11px;color:#000;-webkit-text-stroke:0.22px currentColor;transform:scaleX(0.9999);transform-origin:0 0;">preparación de material,</div>
<svg class="a" style="left:822.2px;top:227px;" width="4" height="4" viewBox="0 0 4 4"><circle cx="2" cy="2" r="1.9" fill="#111"/></svg>
<div class="a" style="left:836.80px;top:223px;font-size:9.60px;line-height:11px;color:#000;-webkit-text-stroke:0.22px currentColor;transform:scaleX(0.9999);transform-origin:0 0;">espacio, ubicación de los participantes</div>
<div class="a" style="left:1047.40px;top:199px;font-size:9.60px;line-height:11px;color:#000;-webkit-text-stroke:0.22px currentColor;transform:scaleX(0.9999);transform-origin:0 0;">Días de</div>
<div class="a" style="left:1047.40px;top:210px;font-size:9.60px;line-height:11px;color:#000;-webkit-text-stroke:0.22px currentColor;transform:scaleX(0.9999);transform-origin:0 0;">anterioridad</div>
<div class="a" style="left:738.30px;top:249px;font-size:9.60px;line-height:11px;color:#000;-webkit-text-stroke:0.22px currentColor;transform:scaleX(0.9999);transform-origin:0 0;">ACTIVIDAD</div>
<div class="a" style="left:896.69px;top:249px;font-size:9.60px;line-height:11px;color:#000;-webkit-text-stroke:0.22px currentColor;transform:scaleX(0.9999);transform-origin:0 0;">DESARROLLO</div>
<div class="a" style="left:1047.40px;top:249px;font-size:9.60px;line-height:11px;color:#000;-webkit-text-stroke:0.22px currentColor;transform:scaleX(0.9999);transform-origin:0 0;">Tiempo</div>
<div class="a" style="left:738.30px;top:263px;font-size:9.60px;line-height:11px;color:#000;-webkit-text-stroke:0.22px currentColor;transform:scaleX(0.9999);transform-origin:0 0;">Dinámica</div>
<div class="a" style="left:738.30px;top:273px;font-size:9.60px;line-height:11px;color:#000;-webkit-text-stroke:0.22px currentColor;transform:scaleX(0.9999);transform-origin:0 0;">Presentación de</div>
<div class="a" style="left:738.30px;top:283px;font-size:9.60px;line-height:11px;color:#000;-webkit-text-stroke:0.22px currentColor;transform:scaleX(0.9999);transform-origin:0 0;">cada uno y su</div>
<div class="a" style="left:738.30px;top:294px;font-size:9.60px;line-height:11px;color:#000;-webkit-text-stroke:0.22px currentColor;transform:scaleX(0.9999);transform-origin:0 0;">expectativa</div>
<svg class="a" style="left:822.2px;top:268.6px;" width="4" height="4" viewBox="0 0 4 4"><circle cx="2" cy="2" r="1.9" fill="#111"/></svg>
<div class="a" style="left:836.80px;top:265px;font-size:9.60px;line-height:11px;color:#000;-webkit-text-stroke:0.22px currentColor;transform:scaleX(0.9999);transform-origin:0 0;">Bienvenida por parte del anfitrión</div>
<svg class="a" style="left:822.2px;top:281px;" width="4" height="4" viewBox="0 0 4 4"><circle cx="2" cy="2" r="1.9" fill="#111"/></svg>
<div class="a" style="left:836.80px;top:277px;font-size:9.60px;line-height:11px;color:#000;-webkit-text-stroke:0.22px currentColor;transform:scaleX(0.9999);transform-origin:0 0;">Dinámica rompe hielo entre los participantes,</div>
<div class="a" style="left:853.80px;top:288px;font-size:9.60px;line-height:11px;color:#000;-webkit-text-stroke:0.22px currentColor;transform:scaleX(0.9999);transform-origin:0 0;">“yo y mi fruta favorita”</div>
<div class="a" style="left:1047.40px;top:263px;font-size:9.60px;line-height:11px;color:#000;-webkit-text-stroke:0.22px currentColor;transform:scaleX(0.9999);transform-origin:0 0;">10 min</div>
<div class="a" style="left:738.30px;top:316px;font-size:9.60px;line-height:11px;color:#000;-webkit-text-stroke:0.22px currentColor;transform:scaleX(0.9999);transform-origin:0 0;">Nombres</div>
<div class="a" style="left:907.36px;top:316px;font-size:9.60px;line-height:11px;color:#000;-webkit-text-stroke:0.22px currentColor;transform:scaleX(0.9999);transform-origin:0 0;">Funciones</div>
<div class="a" style="left:1047.40px;top:316px;font-size:9.60px;line-height:11px;color:#000;-webkit-text-stroke:0.22px currentColor;transform:scaleX(0.9999);transform-origin:0 0;">Tiempo</div>
<div class="a" style="left:738.30px;top:330px;font-size:9.60px;line-height:11px;color:#000;-webkit-text-stroke:0.22px currentColor;transform:scaleX(0.9999);transform-origin:0 0;">Psc. Beatriz</div>
<svg class="a" style="left:738px;top:339.5px;" width="16" height="3" viewBox="0 0 16 3"><path d="M0 1.5 L1.5 0.3 L3 1.8 L4.5 0.3 L6 1.8 L7.5 0.3 L9 1.8 L10.5 0.3 L12 1.8 L13.5 0.3 L15 1.8" fill="none" stroke="#e01010" stroke-width="1"/></svg>
<div class="a" style="left:738.30px;top:341px;font-size:9.60px;line-height:11px;color:#000;-webkit-text-stroke:0.22px currentColor;transform:scaleX(0.9999);transform-origin:0 0;">García Vera.</div>
<div class="a" style="left:822.40px;top:330px;font-size:9.60px;line-height:11px;color:#000;-webkit-text-stroke:0.22px currentColor;transform:scaleX(0.9999);transform-origin:0 0;">Explicación de la metodología del taller.</div>
<div class="a" style="left:822.40px;top:341px;font-size:9.60px;line-height:11px;color:#000;-webkit-text-stroke:0.22px currentColor;transform:scaleX(0.9999);transform-origin:0 0;">Metodología: Participativa, Reflexiva de</div>
<div class="a" style="left:822.40px;top:352px;font-size:9.60px;line-height:11px;color:#000;-webkit-text-stroke:0.22px currentColor;transform:scaleX(0.9999);transform-origin:0 0;">enseñanza aprendizaje</div>
<div class="a" style="left:1047.40px;top:330px;font-size:9.60px;line-height:11px;color:#000;-webkit-text-stroke:0.22px currentColor;transform:scaleX(0.9999);transform-origin:0 0;">10 min</div>
<div class="a" style="left:738.30px;top:375px;font-size:9.60px;line-height:11px;color:#000;-webkit-text-stroke:0.22px currentColor;transform:scaleX(0.9999);transform-origin:0 0;">ACTIVIDAD</div>
<div class="a" style="left:896.69px;top:375px;font-size:9.60px;line-height:11px;color:#000;-webkit-text-stroke:0.22px currentColor;transform:scaleX(0.9999);transform-origin:0 0;">DESARROLLO</div>
<div class="a" style="left:1047.40px;top:375px;font-size:9.60px;line-height:11px;color:#000;-webkit-text-stroke:0.22px currentColor;transform:scaleX(0.9999);transform-origin:0 0;">tiempo</div>
<div class="a" style="left:752.50px;top:400px;font-size:8.87px;line-height:10px;color:#000;-webkit-text-stroke:0.22px currentColor;transform:scaleX(0.9999);transform-origin:0 0;">Acróstico sobre</div>
<div class="a" style="left:752.50px;top:411px;font-size:8.75px;line-height:10px;color:#000;-webkit-text-stroke:0.22px currentColor;transform:scaleX(0.9999);transform-origin:0 0;">sexualidad</div>
<div class="a" style="left:1047.40px;top:389px;font-size:9.60px;line-height:11px;color:#000;-webkit-text-stroke:0.22px currentColor;transform:scaleX(0.9999);transform-origin:0 0;">20 min</div>
<div class="a" style="left:836.70px;top:390px;font-size:9.30px;line-height:10px;color:#000;-webkit-text-stroke:0.22px currentColor;transform:scaleX(0.9396);transform-origin:0 0;">Técnica. "Acróstico"</div>
<div class="a" style="left:818px;top:389px;width:223px;height:2px;background:#fff"></div>
<div class="a" style="left:733px;top:390px;width:373px;height:1px;background:#000"></div>
<div class="a" style="left:837px;top:406px;width:2px;height:2px;background:#111"></div>
<div class="a" style="left:850.20px;top:402px;font-size:9.30px;line-height:10px;color:#000;-webkit-text-stroke:0.22px currentColor;transform:scaleX(0.9351);transform-origin:0 0;">En una hoja con la palabra sexualidad escrita en</div>
<div class="a" style="left:836.70px;top:414px;font-size:9.30px;line-height:10px;color:#000;-webkit-text-stroke:0.22px currentColor;word-spacing:8.124px;transform:scaleX(0.8999);transform-origin:0 0;">forma vertical pedir a los participantes que</div>
<div class="a" style="left:836.70px;top:425px;font-size:9.30px;line-height:10px;color:#000;-webkit-text-stroke:0.22px currentColor;word-spacing:1.567px;transform:scaleX(0.8999);transform-origin:0 0;">mencionen todas las palabras que describan lo que</div>
<div class="a" style="left:836.70px;top:437px;font-size:9.30px;line-height:10px;color:#000;-webkit-text-stroke:0.22px currentColor;transform:scaleX(0.9527);transform-origin:0 0;">es la sexualidad. Ejemplos. sentir, erótico, amor.</div>
<div class="a" style="left:837px;top:453px;width:2px;height:2px;background:#111"></div>
<div class="a" style="left:850.20px;top:449px;font-size:9.30px;line-height:10px;color:#000;-webkit-text-stroke:0.22px currentColor;transform:scaleX(0.9548);transform-origin:0 0;">Anotar todas las palabras</div>
<div class="a" style="left:837px;top:464px;width:2px;height:2px;background:#111"></div>
<div class="a" style="left:850.20px;top:460px;font-size:9.30px;line-height:10px;color:#000;-webkit-text-stroke:0.22px currentColor;transform:scaleX(0.9328);transform-origin:0 0;">Concluir con la idea de que la sexualidad implica</div>
<div class="a" style="left:836.70px;top:472px;font-size:9.30px;line-height:10px;color:#000;-webkit-text-stroke:0.22px currentColor;word-spacing:2.341px;transform:scaleX(0.8999);transform-origin:0 0;">no sólo los órganos genitales o la diferencia entre</div>
<div class="a" style="left:836.70px;top:483px;font-size:9.30px;line-height:10px;color:#000;-webkit-text-stroke:0.22px currentColor;word-spacing:1.128px;transform:scaleX(0.8999);transform-origin:0 0;">hombres y mujeres; la sexualidad es nuestro cuerpo</div>
<div class="a" style="left:836.70px;top:495px;font-size:9.30px;line-height:10px;color:#000;-webkit-text-stroke:0.22px currentColor;transform:scaleX(0.9508);transform-origin:0 0;">y la forma como</div>
<div class="a" style="left:836.70px;top:507px;font-size:9.30px;line-height:10px;color:#000;-webkit-text-stroke:0.22px currentColor;word-spacing:3.297px;transform:scaleX(0.8999);transform-origin:0 0;">interactuamos con los demás. Asegurarse que se</div>
<div class="a" style="left:836.70px;top:518px;font-size:9.30px;line-height:10px;color:#000;-webkit-text-stroke:0.22px currentColor;word-spacing:4.165px;transform:scaleX(0.8999);transform-origin:0 0;">comprenda que "sexo" es sólo una parte de la</div>
<div class="a" style="left:836.70px;top:530px;font-size:9.30px;line-height:10px;color:#000;-webkit-text-stroke:0.22px currentColor;transform:scaleX(0.9330);transform-origin:0 0;">sexualidad.</div>
<div class="a" style="left:738.30px;top:542px;font-size:9.60px;line-height:11px;color:#000;-webkit-text-stroke:0.22px currentColor;transform:scaleX(0.9999);transform-origin:0 0;">Actividad</div>
<div class="a" style="left:822.40px;top:542px;font-size:9.60px;line-height:11px;color:#000;-webkit-text-stroke:0.22px currentColor;transform:scaleX(0.9999);transform-origin:0 0;">DESARROLLO</div>
<div class="a" style="left:1047.40px;top:542px;font-size:9.60px;line-height:11px;color:#000;-webkit-text-stroke:0.22px currentColor;transform:scaleX(0.9999);transform-origin:0 0;">Tiempo</div>
<div class="a" style="left:1047.40px;top:563px;font-size:9.60px;line-height:11px;color:#000;-webkit-text-stroke:0.22px currentColor;transform:scaleX(0.9999);transform-origin:0 0;">15 min</div>
<div class="a" style="left:738.70px;top:639px;font-size:6.62px;line-height:7px;font-weight:bold;color:#222;-webkit-text-stroke:0.08800000000000001px currentColor;transform:scaleX(0.9999);transform-origin:0 0;">CAMBIOS PROPIOS DE</div>
<div class="a" style="left:753.50px;top:648px;font-size:6.53px;line-height:7px;font-weight:bold;color:#222;-webkit-text-stroke:0.08800000000000001px currentColor;transform:scaleX(0.9999);transform-origin:0 0;">LAPUBERTAD</div>
<div class="a" style="left:827.00px;top:565px;font-size:8.87px;line-height:10px;font-weight:bold;color:#000;-webkit-text-stroke:0.08800000000000001px currentColor;transform:scaleX(0.9999);transform-origin:0 0;">Técnica.</div>
<svg class="a" style="left:825.8px;top:580.4px;" width="4" height="4" viewBox="0 0 4 4"><circle cx="2" cy="2" r="1.6" fill="#111"/></svg>
<div class="a" style="left:840.70px;top:577px;font-size:8.70px;line-height:10px;color:#000;-webkit-text-stroke:0.22px currentColor;transform:scaleX(0.9639);transform-origin:0 0;">Se forman tres grupos.</div>
<svg class="a" style="left:825.8px;top:592.4px;" width="4" height="4" viewBox="0 0 4 4"><circle cx="2" cy="2" r="1.6" fill="#111"/></svg>
<div class="a" style="left:840.70px;top:589px;font-size:8.70px;line-height:10px;color:#000;-webkit-text-stroke:0.22px currentColor;transform:scaleX(0.9645);transform-origin:0 0;">Repartir las tarjetas con frases que describen los</div>
<div class="a" style="left:840.70px;top:601px;font-size:8.70px;line-height:10px;color:#000;-webkit-text-stroke:0.22px currentColor;transform:scaleX(0.9645);transform-origin:0 0;">cambios que se presentan en diferentes etapas</div>
<div class="a" style="left:840.70px;top:613px;font-size:8.70px;line-height:10px;color:#000;-webkit-text-stroke:0.22px currentColor;transform:scaleX(1.0122);transform-origin:0 0;">de la vida</div>
<svg class="a" style="left:825.8px;top:628.4px;" width="4" height="4" viewBox="0 0 4 4"><circle cx="2" cy="2" r="1.6" fill="#111"/></svg>
<div class="a" style="left:840.70px;top:625px;font-size:8.70px;line-height:10px;color:#000;-webkit-text-stroke:0.22px currentColor;transform:scaleX(1.0047);transform-origin:0 0;">Al frente de la pizarra se colocan</div>
<div class="a" style="left:840.70px;top:637px;font-size:8.70px;line-height:10px;color:#000;-webkit-text-stroke:0.22px currentColor;transform:scaleX(0.9955);transform-origin:0 0;">tres tarjetas visibles con los nombres</div>
<svg class="a" style="left:825.8px;top:675.4px;" width="4" height="4" viewBox="0 0 4 4"><circle cx="2" cy="2" r="1.6" fill="#111"/></svg>
<div class="a" style="left:840.70px;top:672px;font-size:8.70px;line-height:10px;color:#000;-webkit-text-stroke:0.22px currentColor;transform:scaleX(0.9902);transform-origin:0 0;">Se pide que en grupo decidan bajo que</div>
<div class="a" style="left:840.70px;top:684px;font-size:8.70px;line-height:10px;color:#000;-webkit-text-stroke:0.22px currentColor;transform:scaleX(1.0061);transform-origin:0 0;">título deberán pegar las tarjetas. Verificar</div>
<div class="a" style="left:840.70px;top:696px;font-size:8.70px;line-height:10px;color:#000;-webkit-text-stroke:0.22px currentColor;transform:scaleX(1.0113);transform-origin:0 0;">que laclasificación sea la correcta.</div>
<div class="a" style="left:840.70px;top:649px;font-size:9.30px;line-height:10px;color:#000;-webkit-text-stroke:0.22px currentColor;transform:scaleX(0.9750);transform-origin:0 0;">de  “<b>Infancia</b>”,”<b>adolescencia</b>” <b>y</b></div>
<div class="a" style="left:840.70px;top:660px;font-size:9.30px;line-height:10px;color:#000;-webkit-text-stroke:0.22px currentColor;transform:scaleX(0.9776);transform-origin:0 0;">”<b>adultez</b>”.</div>
<div class="a" style="left:0px;top:706px;width:1366px;height:22px;background:#f3f3f3;border-top:1px solid #d8d8d8"></div>
<div class="a" style="left:8.50px;top:712px;font-size:11.02px;line-height:12px;color:#444;">Página 1 de 7</div>
<div class="a" style="left:102.00px;top:712px;font-size:11.16px;line-height:12px;color:#444;">805 palabras</div>
<svg class="a" style="left:186px;top:710px;" width="15" height="14" viewBox="0 0 15 14"><path d="M0.5 1.5 C3 0.5 5 0.5 7 1.5 V12 C5 11 3 11 0.5 12 Z" fill="none" stroke="#666"/><path d="M7 1.5 C9 0.5 11 0.5 13 1.5 V6" fill="none" stroke="#666"/><path d="M7 12 V14" stroke="#666"/><path d="M9.5 7 L14 11.5 M14 7 L9.5 11.5" stroke="#666"/></svg>
<div class="a" style="left:217.00px;top:712px;font-size:10.88px;line-height:12px;color:#444;">Español (España)</div>
<svg class="a" style="left:322px;top:709px;" width="19" height="17" viewBox="0 0 19 17"><path d="M12 3 A6.5 6.5 0 1 0 8 14.5" fill="none" stroke="#555" stroke-width="1.2" stroke-dasharray="2.5 1.5"/><path d="M7 1 V6 M4.5 4 H11" stroke="#555" stroke-width="1.1"/><path d="M10 9 L17 16 M17 9 L10 16" stroke="#333" stroke-width="1.5"/></svg>
<div class="a" style="left:342.00px;top:712px;font-size:11.37px;line-height:12px;color:#444;">Accesibilidad: es necesario investigar</div>
<svg class="a" style="left:1078px;top:711px;" width="15" height="12" viewBox="0 0 15 12"><path d="M0.5 1 C3 0 5 0 7.5 1.5 C10 0 12 0 14.5 1 V11 C12 10 10 10 7.5 11.5 C5 10 3 10 0.5 11 Z M7.5 1.5 V11.5" fill="none" stroke="#555"/><rect x="2" y="3.5" width="4" height="1.2" fill="#555"/><rect x="2" y="6.0" width="4" height="1.2" fill="#555"/><rect x="2" y="8.5" width="4" height="1.2" fill="#555"/><rect x="9" y="3.5" width="4" height="1.2" fill="#555"/><rect x="9" y="6.0" width="4" height="1.2" fill="#555"/><rect x="9" y="8.5" width="4" height="1.2" fill="#555"/></svg>
<div class="a" style="left:1106px;top:707px;width:40px;height:21px;background:#c8c8c8"></div>
<svg class="a" style="left:1118px;top:711px;" width="15" height="13" viewBox="0 0 15 13"><rect x="0.5" y="0.5" width="14" height="12" fill="none" stroke="#555"/><rect x="3" y="3.0" width="9" height="1.2" fill="#555"/><rect x="3" y="5.3" width="9" height="1.2" fill="#555"/><rect x="3" y="7.6" width="9" height="1.2" fill="#555"/><rect x="3" y="9.899999999999999" width="9" height="1.2" fill="#555"/></svg>
<svg class="a" style="left:1158px;top:711px;" width="16" height="13" viewBox="0 0 16 13"><rect x="0.5" y="0.5" width="13" height="11" fill="none" stroke="#555"/><rect x="2.5" y="3.0" width="8" height="1.2" fill="#555"/><rect x="2.5" y="5.3" width="8" height="1.2" fill="#555"/><rect x="2.5" y="7.6" width="8" height="1.2" fill="#555"/><circle cx="12.5" cy="10" r="3" fill="#f3f3f3" stroke="#555"/></svg>
<div class="a" style="left:1187px;top:707px;width:179px;height:21px;background:#f3f3f3"></div>
<div class="a" style="left:1187px;top:707px;width:18px;height:21px;background:#d8d8d8"></div>
<div class="a" style="left:1191px;top:716px;width:9px;height:1px;background:#555"></div>
<div class="a" style="left:1205px;top:716px;width:101px;height:1px;background:#777"></div>
<div class="a" style="left:1231px;top:711px;width:5px;height:11px;background:#555"></div>
<div class="a" style="left:1255px;top:713px;width:1px;height:7px;background:#777"></div>
<div class="a" style="left:1309px;top:716px;width:9px;height:1px;background:#555"></div>
<div class="a" style="left:1313px;top:712px;width:1px;height:9px;background:#555"></div>
<div class="a" style="left:1330.50px;top:713px;font-size:10.49px;line-height:11px;color:#444;">60%</div>
<div class="a" style="left:0px;top:728px;width:1366px;height:40px;background:#1c2a30"></div>
<svg class="a" style="left:16px;top:740px;" width="16" height="16" viewBox="0 0 16 16"><path d="M0 2.2 L6.5 1.3 V7.5 H0 Z M7.5 1.1 L16 0 V7.5 H7.5 Z M0 8.5 H6.5 V14.7 L0 13.8 Z M7.5 8.5 H16 V16 L7.5 14.9 Z" fill="#fff"/></svg>
<div class="a" style="left:48px;top:728px;width:344px;height:40px;background:#f0f0f0"></div>
<svg class="a" style="left:60px;top:739px;" width="17" height="17" viewBox="0 0 17 17"><circle cx="10.5" cy="6.5" r="5.5" fill="none" stroke="#222" stroke-width="1.3"/><path d="M6.5 10.5 L1 16" stroke="#222" stroke-width="1.5"/></svg>
<div class="a" style="left:88.00px;top:741px;font-size:14.48px;line-height:16px;color:#222;">Escribe aquí para buscar</div>
<svg class="a" style="left:405px;top:738px;" width="22" height="22" viewBox="0 0 22 22"><circle cx="11" cy="11" r="8.5" fill="none" stroke="#fff" stroke-width="2"/></svg>
<svg class="a" style="left:455px;top:740px;" width="18" height="15" viewBox="0 0 18 15"><rect x="1.5" y="3.5" width="9" height="8" fill="none" stroke="#fff" stroke-width="1.3"/><path d="M0 1 H13 M0 14 H13" stroke="#fff" stroke-width="1.3"/><path d="M15.5 0 V3 M15.5 5 V10 M15.5 12 V15" stroke="#fff" stroke-width="1.4"/></svg>
<svg class="a" style="left:503px;top:738px;" width="23" height="19" viewBox="0 0 23 19"><path d="M0.5 2 C0.5 1 1 0.5 2 0.5 H8 L10 2.5 H21 C22 2.5 22.5 3 22.5 4 V17 C22.5 18 22 18.5 21 18.5 H2 C1 18.5 0.5 18 0.5 17 Z" fill="#f0b429"/><rect x="0.5" y="5" width="22" height="13.5" rx="1" fill="#ffd866"/><path d="M6 18.5 V12 H17 V18.5 H14 V15 H9 V18.5 Z" fill="#3d8fe0"/></svg>
<svg class="a" style="left:551px;top:735px;" width="26" height="26" viewBox="0 0 26 26"><defs><linearGradient id="eg1" x1="0" y1="0" x2="1" y2="0.3"><stop offset="0" stop-color="#1d6fd6"/><stop offset="0.6" stop-color="#2aa0e8"/><stop offset="1" stop-color="#5ad276"/></linearGradient><linearGradient id="eg2" x1="0" y1="0" x2="0" y2="1"><stop offset="0" stop-color="#1b5fc0"/><stop offset="1" stop-color="#0e3f8a"/></linearGradient></defs><path d="M13 1 C20 1 25 6 25 12 C25 16 22 18 19 18 C15 18 13 16 13 14 C13 12 15 12 15 11 C15 9 12 8 9.5 9 C5 10.5 3 15 4.5 19.5 C2 17 1 14.5 1 12.5 C1 6 6 1 13 1 Z" fill="url(#eg1)"/><path d="M4.5 19.5 C3 15 5 10.5 9.5 9 C12 8 15 9 15 11 C13 11 10 12.5 10 16 C10 20 14 23.5 19 23 C17 24.5 15 25 13 25 C9 25 6 23 4.5 19.5 Z" fill="url(#eg2)"/></svg>
<svg class="a" style="left:601px;top:737px;" width="23" height="23" viewBox="0 0 23 23"><path d="M7 6 V3.5 C7 2 8 1 9.5 1 H13.5 C15 1 16 2 16 3.5 V6" fill="none" stroke="#2b8fe0" stroke-width="1.6"/><rect x="0.5" y="5.5" width="22" height="17" rx="2.5" fill="#f2f2f2"/><rect x="7" y="9" width="4" height="4" fill="#f25022"/><rect x="12" y="9" width="4" height="4" fill="#7fba00"/><rect x="7" y="14" width="4" height="4" fill="#00a4ef"/><rect x="12" y="14" width="4" height="4" fill="#ffb900"/></svg>
<svg class="a" style="left:650px;top:736px;" width="25" height="23" viewBox="0 0 25 23"><path d="M0 8 L12.5 0 L25 8 V23 H0 Z" fill="#0f6cc4"/><path d="M2 8 L12.5 15 L23 8 V6 H2 Z" fill="#ffffff"/><path d="M0 8 L12.5 16 L25 8 V23 H0 Z" fill="#28a8ea"/><path d="M0 23 L10 14 L12.5 16 L15 14 L25 23 Z" fill="#3cc0f5" opacity="0.6"/></svg>
<svg class="a" style="left:700px;top:736px;" width="28" height="26" viewBox="0 0 28 26"><circle cx="12" cy="12" r="11" fill="#db4437"/><path d="M12 12 L1.5 8 A11 11 0 0 0 8 22.5 Z" fill="#0f9d58"/><path d="M12 12 L8 22.5 A11 11 0 0 0 23 12 Z" fill="#ffcd40"/><circle cx="12" cy="12" r="4.5" fill="#4285f4" stroke="#fff" stroke-width="1.5"/><circle cx="19.5" cy="18" r="7" fill="#e9a0b0"/><path d="M15 24 C14 18 16 13 19.5 13 C23 13 25 18 24 24 Z" fill="#2a1a18"/><ellipse cx="19.5" cy="18.5" rx="2.5" ry="3.5" fill="#f0d0c0"/></svg>
<svg class="a" style="left:748px;top:737px;" width="24" height="24" viewBox="0 0 24 24"><rect x="0" y="0" width="24" height="24" rx="7" fill="#4a8cff"/><rect x="4" y="8" width="11" height="8" rx="2" fill="#fff"/><path d="M16 11 L20 8.5 V15.5 L16 13 Z" fill="#fff"/></svg>
<div class="a" style="left:785px;top:728px;width:44px;height:40px;background:#3a474d"></div>
<svg class="a" style="left:795px;top:736px;" width="26" height="24" viewBox="0 0 26 24"><rect x="6" y="1" width="19" height="22" rx="1.5" fill="#2b7cd3"/><rect x="6" y="8" width="19" height="7" fill="#185abd"/><rect x="6" y="15" width="19" height="8" fill="#103f91"/><rect x="0" y="5" width="14" height="14" rx="1.5" fill="#185abd"/><text x="1.8" y="16" font-size="11" font-weight="bold" fill="#fff" font-family="Liberation Sans">W</text></svg>
<svg class="a" style="left:845px;top:736px;" width="26" height="24" viewBox="0 0 26 24"><rect x="6" y="1" width="19" height="22" rx="1.5" fill="#21a366"/><rect x="6" y="8" width="19" height="7" fill="#107c41"/><rect x="6" y="15" width="19" height="8" fill="#185c37"/><rect x="0" y="5" width="14" height="14" rx="1.5" fill="#107c41"/><text x="3" y="16" font-size="11" font-weight="bold" fill="#fff" font-family="Liberation Sans">X</text></svg>
<svg class="a" style="left:895px;top:736px;" width="25" height="24" viewBox="0 0 25 24"><circle cx="14" cy="12" r="11" fill="#ed6c47"/><path d="M14 12 V1 A11 11 0 0 1 25 12 Z" fill="#ff8f6b"/><rect x="0" y="5" width="14" height="14" rx="1.5" fill="#c43e1c"/><text x="3" y="16" font-size="11" font-weight="bold" fill="#fff" font-family="Liberation Sans">P</text></svg>
<div class="a" style="left:495px;top:766px;width:40px;height:2px;background:#8fb9e6"></div>
<div class="a" style="left:544px;top:766px;width:40px;height:2px;background:#8fb9e6"></div>
<div class="a" style="left:691px;top:766px;width:39px;height:2px;background:#8fb9e6"></div>
<div class="a" style="left:785px;top:766px;width:44px;height:2px;background:#8fb9e6"></div>
<div class="a" style="left:838px;top:766px;width:39px;height:2px;background:#8fb9e6"></div>
<svg class="a" style="left:972px;top:739px;" width="24" height="17" viewBox="0 0 24 17"><path d="M5 16 A5 5 0 0 1 5 7 A7 7 0 0 1 18 6 A5 5 0 0 1 19 16 Z" fill="#a7c8e6"/></svg>
<div class="a" style="left:1004.00px;top:742px;font-size:12.98px;line-height:15px;color:#fff;">30°C</div>
<svg class="a" style="left:1050px;top:745px;" width="13" height="7" viewBox="0 0 13 7"><path d="M0.5 6.5 L6.5 0.8 L12.5 6.5" fill="none" stroke="#fff" stroke-width="1.3"/></svg>
<svg class="a" style="left:1075px;top:738px;" width="12" height="20" viewBox="0 0 12 20"><rect x="0" y="0" width="12" height="20" rx="6" fill="#1f7ae0"/><path d="M3 6 L9 13 L6 16 V4 L9 7 L3 14" fill="none" stroke="#fff" stroke-width="1"/></svg>
<svg class="a" style="left:1096px;top:742px;" width="19" height="12" viewBox="0 0 19 12"><path d="M3 11.5 A3 3 0 0 1 3 5.5 A5 5 0 0 1 12 3.5 A4 4 0 0 1 18 8 A3.5 3.5 0 0 1 16 11.5 Z" fill="#e6e6e6"/></svg>
<svg class="a" style="left:1123px;top:740px;" width="13" height="16" viewBox="0 0 13 16"><rect x="1" y="2.5" width="9" height="11" rx="2" fill="none" stroke="#fff" stroke-width="1.2"/><path d="M10 6 L12.5 5 V11 L10 10" fill="none" stroke="#fff"/><path d="M4 0.5 H7" stroke="#fff"/></svg>
<svg class="a" style="left:1147px;top:740px;" width="14" height="15" viewBox="0 0 14 15"><path d="M1 14 A13 13 0 0 1 14 1 M4 14 A10 10 0 0 1 14 4 M7 14 A7 7 0 0 1 14 7 M10 14 A4 4 0 0 1 14 10" fill="none" stroke="#fff" stroke-width="1.1"/></svg>
<svg class="a" style="left:1170px;top:742px;" width="16" height="13" viewBox="0 0 16 13"><rect x="0.5" y="2.5" width="13" height="9" fill="none" stroke="#fff"/><rect x="14" y="5" width="1.5" height="4" fill="#fff"/><circle cx="10" cy="9" r="4.5" fill="#2a9a47"/><path d="M8 9 L10 7 L12 9" fill="none" stroke="#fff"/></svg>
<svg class="a" style="left:1193px;top:740px;" width="17" height="16" viewBox="0 0 17 16"><path d="M1 5.5 H4 L8 1.5 V14.5 L4 10.5 H1 Z" fill="none" stroke="#fff"/><path d="M10.5 5.5 A3 3 0 0 1 10.5 10.5 M12.5 3 A6 6 0 0 1 12.5 13 M14.5 1 A9 9 0 0 1 14.5 15" fill="none" stroke="#fff"/></svg>
<div class="a" style="left:1220.50px;top:743px;font-size:9.49px;line-height:11px;color:#fff;">ESP</div>
<div class="a" style="left:1267.00px;top:732px;font-size:10.79px;line-height:12px;color:#fff;">10:01</div>
<div class="a" style="left:1255.50px;top:751px;font-size:11.58px;line-height:12px;color:#fff;">12/4/2022</div>
<svg class="a" style="left:1324px;top:737px;" width="26" height="28" viewBox="0 0 26 28"><path d="M1 1 H17 V13 H8 L4 16.5 V13 H1 Z" fill="#fff"/><path d="M4 5 H14 M4 8.5 H12" stroke="#1c2a30" stroke-width="1.2"/><circle cx="16" cy="18" r="7.2" fill="#3a3f42" stroke="#fff" stroke-width="1"/><text x="13" y="22" font-size="10.5" font-weight="bold" fill="#fff" font-family="Liberation Sans">1</text></svg>
</div></body></html>
